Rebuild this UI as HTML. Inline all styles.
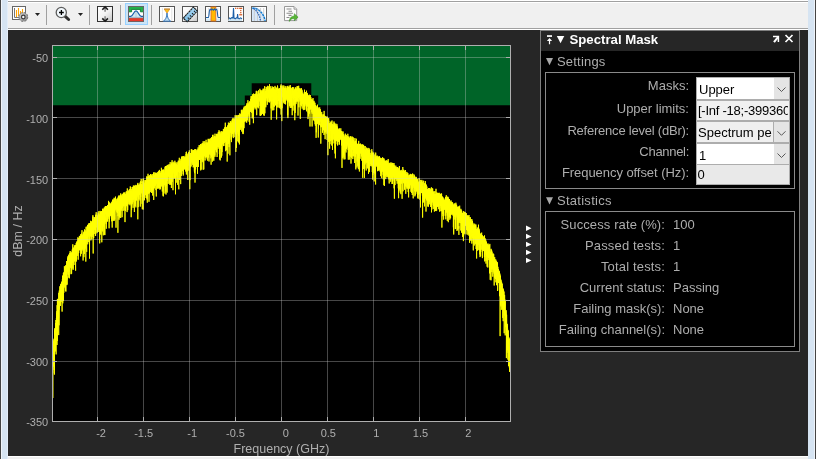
<!DOCTYPE html>
<html><head><meta charset="utf-8"><title>Spectrum Analyzer</title>
<style>
*{box-sizing:border-box;margin:0;padding:0}
html,body{width:816px;height:459px;overflow:hidden;background:#f0f0f0}
body{position:relative;font-family:"Liberation Sans",Arial,sans-serif;font-size:13px;color:#afafaf}
.abs{position:absolute}
#dark{left:8px;top:30px;width:800px;height:426px;background:#262626}
.t{position:absolute;white-space:nowrap;line-height:1}
.lab{position:absolute;white-space:nowrap;line-height:16px;height:16px;color:#adadad;font-size:13px;text-align:right}
.val{position:absolute;white-space:nowrap;line-height:16px;height:16px;color:#adadad;font-size:13px}
.tick{position:absolute;white-space:nowrap;font-size:11px;line-height:12px;height:12px;color:#afafaf}
.sep{position:absolute;top:5px;width:1px;height:20px;background:#a0a0a0}
#wrap{position:absolute;left:0;top:0;width:816px;height:459px;will-change:transform;transform:translateZ(0)}
</style></head><body><div id="wrap">
<!-- window chrome -->
<div class="abs" style="left:0;top:0;width:816px;height:1px;background:#fff"></div>
<div class="abs" style="left:0;top:1px;width:816px;height:1px;background:#a0a0a0"></div>
<div class="abs" style="left:0;top:2px;width:816px;height:1px;background:#fff"></div>
<div class="abs" style="left:0;top:28px;width:816px;height:1px;background:#a0a0a0"></div>
<div class="abs" style="left:0;top:29px;width:816px;height:1px;background:#fff"></div>
<div class="abs" style="left:0;top:456px;width:816px;height:1px;background:#fff"></div>
<div class="abs" style="left:0;top:0;width:1px;height:459px;background:#444"></div>
<div class="abs" style="left:1px;top:0;width:1px;height:459px;background:#f0f4fa"></div>
<div class="abs" style="left:2px;top:0;width:5px;height:459px;background:#d6e4f2"></div>
<div class="abs" style="left:7px;top:0;width:1px;height:459px;background:#e4eefa"></div>
<div class="abs" style="left:808px;top:0;width:6px;height:459px;background:#d6e4f2"></div>
<div class="abs" style="left:814px;top:0;width:1px;height:459px;background:#eef3fa"></div>
<div class="abs" style="left:815px;top:0;width:1px;height:459px;background:#444"></div>
<div id="dark" class="abs"></div>

<!-- toolbar -->
<div id="toolbar" class="abs" style="left:8px;top:3px;width:800px;height:25px;background:#f0f0f0">
</div>
<div class="sep" style="left:46px"></div>
<div class="sep" style="left:89px"></div>
<div class="sep" style="left:120px"></div>
<div class="sep" style="left:151px"></div>
<div class="sep" style="left:274px"></div>
<div class="abs" style="left:125px;top:3px;width:23px;height:22px;background:#cce4f7;border:1px solid #99d1ff"></div>
<svg class="abs" style="left:0;top:0" width="816" height="30" viewBox="0 0 816 30">
<defs>
<linearGradient id="gw" x1="0" y1="0" x2="1" y2="1"><stop offset="0" stop-color="#fff"/><stop offset="0.5" stop-color="#f4f4f4"/><stop offset="1" stop-color="#c4c4c4"/></linearGradient>
<linearGradient id="gg" x1="0" y1="0" x2="1" y2="1"><stop offset="0" stop-color="#dcdcdc"/><stop offset="1" stop-color="#808080"/></linearGradient>
<linearGradient id="gb" x1="0" y1="0" x2="0" y2="1"><stop offset="0" stop-color="#a9d6f2"/><stop offset="1" stop-color="#7fbfe8"/></linearGradient>
</defs>
<!-- 1: configure plot -->
<rect x="12.5" y="6.5" width="13" height="13" fill="#fff" stroke="#666"/>
<path d="M14.5 8v9.5h8" fill="none" stroke="#777"/>
<g stroke="#ffa200" stroke-width="1.1"><path d="M16.5 10v7M18.5 8v8M20.5 11v4M22.5 9v4"/></g>
<circle cx="23.3" cy="17" r="4.400" fill="none" stroke="#808080" stroke-width="1.100" stroke-dasharray="2 1.456"/>
<circle cx="23.3" cy="17" r="4.100" fill="url(#gg)" stroke="#777" stroke-width="0.500"/>
<circle cx="23.3" cy="17" r="1.800" fill="#f6f6f6" stroke="#3a3a3a" stroke-width="1.200"/>
<path d="M35 13h5l-2.5 3z" fill="#222"/>
<!-- 2: zoom -->
<path d="M65.2 16.4l3.4 3.1" stroke="#2e2e2e" stroke-width="3" stroke-linecap="round"/>
<circle cx="61.3" cy="12.5" r="5.1" fill="#f2f8fc" stroke="#5e5e5e" stroke-width="1.3"/>
<path d="M59 12.5h4.8M61.4 10.1v4.8" stroke="#000" stroke-width="1.3"/>
<path d="M78 13h5l-2.5 3z" fill="#222"/>
<!-- 3: autoscale -->
<rect x="97.5" y="6.5" width="15" height="15" fill="url(#gw)" stroke="#333"/>
<path d="M105.1 8v3.7M105.1 16.2v3.8" stroke="#8a8a8a" stroke-width="1.6"/>
<path d="M102.3 9.8l2.8-2.8 2.8 2.8M102.3 18.4l2.8 2.8 2.8-2.8" fill="none" stroke="#1a1a1a" stroke-width="1.6"/>
<!-- 4: spectral mask (selected) -->
<rect x="128.5" y="6.5" width="15" height="15" fill="#fff" stroke="#666"/>
<path d="M129 7h14v4.8h-2.6v-2.4h-8.8v2.4H129z" fill="#22b14c"/>
<path d="M129 11.8h2.6v-2.4h8.8v2.4H143" fill="none" stroke="#0b7d2f" stroke-width="0.9"/>
<rect x="129" y="16.3" width="14" height="2" fill="#a9d5ec"/>
<path d="M129.5 16.3h1.300c2.400 0 2.900-5.500 5.200-5.500s2.800 5.500 5.200 5.500h1.300z" fill="#d3e8f3"/>
<path d="M136 11v6" stroke="#9fb8c8" stroke-width="0.6"/>
<path d="M129 16.300h1.800c2.400 0 2.900-5.500 5.200-5.500s2.800 5.500 5.200 5.500h1.800" fill="none" stroke="#1c5fa8" stroke-width="1.200"/>
<rect x="129" y="18.2" width="14" height="2.9" fill="#e8382a"/>
<path d="M129 18.2h14" stroke="#b02a1e" stroke-width="0.6"/>
<!-- 5: peak finder -->
<rect x="159.5" y="6.5" width="15" height="15" fill="#fff" stroke="#555"/>
<path d="M162.4 8v13M171.8 8v13" stroke="#e2e2e2" stroke-width="1"/>
<path d="M163.300 21.200c2.600-1.600 3.300-3.800 3.700-8.200 .4 4.400 1.100 6.600 3.700 8.200z" fill="#c4e0f2" stroke="#2a6db5" stroke-width="0.9"/>
<path d="M164.300 9.200h5.400l-2.700 3.900z" fill="#ffc20e" stroke="#d98a1c" stroke-width="0.7"/>
<path d="M164 9h6" stroke="#b97a2a" stroke-width="0.9"/>
<!-- 6: ruler -->
<rect x="182.500" y="6.500" width="15" height="15" fill="url(#gw)" stroke="#555"/>
<path d="M183.300 18.100l10.100-11 3.900 3.900-10.100 10.800z" fill="url(#gb)" stroke="#1a1a1a" stroke-width="1.1" stroke-dasharray="2.2 0.5"/>
<path d="M187.800 17.700l1 1M189.900 15.400l1 1M192 13.100l1 1M194 10.900l1 1" stroke="#1a1a1a" stroke-width="1.1"/>
<!-- 7: channel measurements -->
<rect x="205.500" y="6.500" width="15" height="15" fill="#fff" stroke="#555"/>
<path d="M206 18.500h14v2.500h-14z" fill="#d5e8f4"/>
<path d="M208.500 8v10M217.800 8v10" stroke="#e4e4e4" stroke-width="1"/>
<rect x="211" y="7" width="4.800" height="14" fill="#ffb900" stroke="#e0701f" stroke-width="0.9"/>
<path d="M206 17.500h2.400c.8 0 .6-8 1.600-8.300l1 .9 1-1.200 1.300 1.300 1.300-1.300 1 1.200 1-.9c1 .3.800 8.300 1.600 8.300h2.300" fill="none" stroke="#1c5fa8" stroke-width="1.100"/>
<!-- 8: distortion -->
<rect x="228.500" y="6.500" width="15" height="15" fill="#fff" stroke="#555"/>
<path d="M229 18l1.300.8 1.500-1 1.200.3.500-10 .5 10 1.200.8 1.300-.9.700.2.400-4 .4 4 1.200.8 1.300-.9 1.500.8V21h-14z" fill="#cfe5f2"/>
<path d="M229 17.800l1.300.9 1.500-1.100 1.200.3.500-9.900.5 9.900 1.200.9 1.300-1 .7.200.4-4 .4 4 1.200.9 1.300-1 1.500.9" fill="none" stroke="#1c5fa8" stroke-width="1.100"/>
<g fill="#d9622b"><rect x="235" y="7.700" width="1.300" height="1.300"/><rect x="237.100" y="7.700" width="1.300" height="1.300"/><rect x="239.200" y="7.700" width="3" height="1.300"/><rect x="240.100" y="9.900" width="1.300" height="1.300"/><rect x="240.100" y="12" width="1.300" height="1.300"/><rect x="239.200" y="14.100" width="3" height="1.300"/></g>
<!-- 9: CCDF -->
<rect x="251.500" y="6.500" width="15" height="15" fill="#fff" stroke="#666"/>
<path d="M252 7h3c6 1.500 9.500 7 10 14H252z" fill="#d6e8fb"/>
<path d="M254.300 8v13M257.500 8v13M260.600 8v13M263.700 8v13" stroke="#c9c9c9" stroke-width="0.900"/>
<path d="M252.300 8.200h2.500c5.500 1.800 9.200 6.300 10.400 12.800" fill="none" stroke="#0a78d0" stroke-width="1.400" stroke-dasharray="2.300 .800"/>
<path d="M253.500 8.600c4 2.600 6.300 6.800 7 12.400" fill="none" stroke="#2a5fb0" stroke-width="1.200" stroke-dasharray="1.600 .900"/>
<!-- 10: export -->
<path d="M284.500 6.500h9.500l2.700 2.700v11.400h-12.200z" fill="#fbfbfb" stroke="#999"/>
<path d="M294 6.500v2.700h2.700" fill="#e6e6e6" stroke="#8c8c8c" stroke-width="0.8"/>
<path d="M286.500 9h5M288.500 11.200h3.500M286.500 13.300h6.500M288.500 15.400h3M286.500 17.500h3" stroke="#8c8c8c" stroke-width="1.100"/>
<path d="M289.300 21.500c.100-3.500 2-5.400 5-5.500v-2.300l3.800 3.500-3.800 3.500v-2.200c-2.200-.100-3.800.900-5 3z" fill="#58b535" stroke="#2f8a1e" stroke-width="0.500"/>

</svg>

<!-- plot -->
<svg class="abs" style="left:0;top:30px" width="540" height="426" viewBox="0 30 540 426">
<rect x="52.5" y="45.5" width="458" height="376" fill="#000"/>
<path d="M52.5 45.5H510.5V105.200H318.200V95.400H311.300V83.300H251.700V95.400H244.800V105.200H52.5Z" fill="#006428"/>
<polyline fill="none" stroke="#ffff00" stroke-width="0.9" stroke-linejoin="round" points="52.5,365.5 52.6,361.6 52.6,366.0 52.7,371.0 52.7,373.2 52.8,348.8 52.8,398.0 52.9,348.6 52.9,361.5 53.0,366.0 53.1,360.6 53.1,364.6 53.2,354.8 53.2,352.5 53.3,347.0 53.3,364.6 53.4,341.3 53.5,352.7 53.5,356.8 53.6,348.3 53.6,365.5 53.7,366.6 53.7,344.5 53.8,347.3 53.8,339.4 53.9,349.9 54.0,348.7 54.0,342.4 54.1,347.7 54.1,369.9 54.2,350.9 54.2,341.6 54.3,344.5 54.3,338.3 54.4,374.6 54.5,340.5 54.5,349.2 54.6,346.2 54.6,330.5 54.7,335.4 54.7,328.3 54.8,332.9 54.8,330.7 54.9,349.8 55.0,344.1 55.0,345.3 55.1,333.5 55.1,332.6 55.2,348.4 55.2,340.0 55.3,332.2 55.4,351.4 55.4,348.3 55.5,332.4 55.5,326.5 55.6,323.1 55.6,333.2 55.7,327.7 55.7,331.3 55.8,329.1 55.9,343.3 55.9,320.0 56.0,327.7 56.0,327.1 56.1,354.4 56.1,324.2 56.2,323.7 56.2,323.1 56.3,327.5 56.4,319.9 56.4,318.1 56.5,324.6 56.5,328.9 56.6,315.7 56.6,322.4 56.7,320.9 56.7,335.5 56.8,328.6 56.9,311.1 56.9,318.7 57.0,345.0 57.0,312.7 57.1,320.0 57.1,305.2 57.2,314.5 57.3,312.7 57.3,318.5 57.4,340.9 57.4,298.9 57.5,312.9 57.5,303.5 57.6,319.4 57.6,301.2 57.7,333.0 57.8,307.8 57.8,321.1 57.9,316.5 57.9,303.1 58.0,299.7 58.0,307.8 58.1,302.8 58.1,304.3 58.2,309.0 58.3,299.3 58.3,300.2 58.4,310.2 58.4,305.3 58.5,302.2 58.5,301.9 58.6,317.7 58.7,292.8 58.7,335.1 58.8,299.6 58.8,299.8 58.9,308.7 58.9,303.1 59.0,306.5 59.0,325.3 59.1,301.2 59.2,298.5 59.2,298.5 59.3,290.5 59.3,309.6 59.4,308.6 59.4,301.5 59.5,307.3 59.5,301.2 59.6,291.0 59.7,295.2 59.7,299.9 59.8,298.2 59.8,286.3 59.9,299.6 59.9,294.8 60.0,291.4 60.0,293.6 60.1,293.5 60.2,291.4 60.2,302.6 60.3,296.9 60.3,291.6 60.4,295.6 60.4,288.1 60.5,305.9 60.6,295.8 60.6,298.2 60.7,291.3 60.7,295.8 60.8,283.9 60.8,291.6 60.9,284.8 60.9,287.3 61.0,289.3 61.1,288.8 61.1,292.7 61.2,296.1 61.2,297.1 61.3,301.8 61.3,283.7 61.4,291.1 61.4,295.2 61.5,286.2 61.6,291.2 61.6,287.8 61.7,281.8 61.7,295.6 61.8,287.3 61.8,300.0 61.9,291.3 61.9,288.6 62.0,293.2 62.1,311.6 62.1,291.4 62.2,281.5 62.2,283.0 62.3,287.8 62.3,293.3 62.4,279.1 62.5,281.7 62.5,275.6 62.6,287.5 62.6,278.1 62.7,299.9 62.7,300.9 62.8,303.3 62.8,299.0 62.9,286.3 63.0,297.8 63.0,278.4 63.1,301.1 63.1,284.6 63.2,289.4 63.2,281.0 63.3,300.8 63.3,283.0 63.4,272.9 63.5,278.2 63.5,284.5 63.6,275.6 63.6,280.2 63.7,288.3 63.7,274.4 63.8,292.8 63.9,274.3 63.9,272.8 64.0,276.6 64.0,282.1 64.1,271.9 64.1,287.5 64.2,279.9 64.2,273.4 64.3,275.1 64.4,275.8 64.4,266.2 64.5,275.8 64.5,282.3 64.6,276.5 64.6,271.6 64.7,284.2 64.7,271.2 64.8,267.5 64.9,274.0 64.9,286.7 65.0,279.7 65.0,277.1 65.1,274.0 65.1,275.7 65.2,268.3 65.2,271.9 65.3,278.9 65.4,290.8 65.4,278.4 65.5,278.1 65.5,268.5 65.6,275.9 65.6,265.3 65.7,270.5 65.8,269.0 65.8,267.1 65.9,291.6 65.9,269.7 66.0,280.1 66.0,269.5 66.1,266.1 66.1,271.9 66.2,274.6 66.3,266.3 66.3,271.1 66.4,275.9 66.4,272.0 66.5,270.2 66.5,280.1 66.6,267.5 66.6,261.0 66.7,270.7 66.8,285.1 66.8,264.2 66.9,274.2 66.9,279.6 67.0,276.5 67.0,284.4 67.1,268.6 67.1,265.8 67.2,271.2 67.3,262.7 67.3,265.4 67.4,269.2 67.4,265.9 67.5,262.4 67.5,269.4 67.6,266.4 67.7,272.0 67.7,269.4 67.8,256.4 67.8,264.0 67.9,265.2 67.9,258.3 68.0,274.4 68.0,259.7 68.1,258.6 68.2,268.8 68.2,260.8 68.3,259.0 68.3,258.4 68.4,261.9 68.4,274.9 68.5,273.4 68.5,255.8 68.6,259.1 68.7,254.7 68.7,262.2 68.8,259.0 68.8,277.6 68.9,260.2 68.9,265.9 69.0,262.8 69.1,271.5 69.1,256.4 69.2,262.0 69.2,263.1 69.3,262.8 69.3,278.3 69.4,254.9 69.4,262.7 69.5,265.0 69.6,265.1 69.6,257.1 69.7,262.8 69.7,266.2 69.8,253.1 69.8,261.7 69.9,267.0 69.9,257.4 70.0,257.0 70.1,262.4 70.1,265.0 70.2,251.0 70.2,264.1 70.3,262.5 70.3,252.7 70.4,262.6 70.4,263.8 70.5,253.9 70.6,259.4 70.6,257.8 70.7,261.5 70.7,254.8 70.8,268.1 70.8,254.2 70.9,264.4 71.0,262.5 71.0,274.2 71.1,253.5 71.1,253.8 71.2,252.5 71.2,262.1 71.3,264.8 71.3,253.5 71.4,259.9 71.5,253.6 71.5,259.7 71.6,259.2 71.6,273.7 71.7,253.4 71.7,260.5 71.8,267.5 71.8,254.4 71.9,257.3 72.0,259.7 72.0,251.8 72.1,259.6 72.1,255.2 72.2,260.9 72.2,253.0 72.3,249.4 72.3,252.3 72.4,257.6 72.5,249.5 72.5,253.8 72.6,262.2 72.6,261.3 72.7,262.6 72.7,251.0 72.8,244.3 72.9,250.5 72.9,268.6 73.0,254.0 73.0,248.6 73.1,255.1 73.1,269.9 73.2,258.2 73.2,258.0 73.3,261.2 73.4,258.2 73.4,248.3 73.5,251.0 73.5,254.0 73.6,248.2 73.6,247.6 73.7,254.3 73.7,251.8 73.8,256.4 73.9,259.0 73.9,253.1 74.0,265.0 74.0,252.8 74.1,261.7 74.1,253.4 74.2,251.3 74.3,253.8 74.3,247.7 74.4,253.2 74.4,252.9 74.5,259.2 74.5,250.8 74.6,245.7 74.6,246.1 74.7,261.0 74.8,247.0 74.8,248.2 74.9,246.3 74.9,245.2 75.0,249.0 75.0,250.1 75.1,246.0 75.1,247.6 75.2,253.6 75.3,247.7 75.3,253.3 75.4,247.8 75.4,250.9 75.5,253.7 75.5,252.8 75.6,270.7 75.6,245.0 75.7,250.6 75.8,252.8 75.8,250.3 75.9,246.6 75.9,249.2 76.0,252.1 76.0,247.1 76.1,247.9 76.2,243.1 76.2,259.2 76.3,247.4 76.3,248.0 76.4,245.9 76.4,261.5 76.5,252.1 76.5,255.9 76.6,250.2 76.7,243.0 76.7,254.2 76.8,245.6 76.8,242.3 76.9,246.5 76.9,246.8 77.0,241.3 77.0,243.3 77.1,247.7 77.2,242.6 77.2,247.7 77.3,249.0 77.3,245.2 77.4,243.0 77.4,248.5 77.5,244.1 77.5,246.0 77.6,247.0 77.7,241.7 77.7,252.4 77.8,255.9 77.8,243.8 77.9,245.6 77.9,237.3 78.0,244.6 78.1,240.4 78.1,246.4 78.2,259.7 78.2,243.8 78.3,250.9 78.3,247.1 78.4,238.1 78.4,246.3 78.5,246.0 78.6,246.4 78.6,239.1 78.7,253.1 78.7,246.1 78.8,249.9 78.8,247.2 78.9,242.4 78.9,245.7 79.0,239.2 79.1,241.6 79.1,246.6 79.2,245.3 79.2,246.1 79.3,243.1 79.3,239.8 79.4,235.9 79.5,250.3 79.5,240.1 79.6,248.2 79.6,238.5 79.7,240.9 79.7,245.0 79.8,242.1 79.8,238.0 79.9,246.1 80.0,237.8 80.0,241.6 80.1,236.3 80.1,238.5 80.2,241.0 80.2,243.1 80.3,238.0 80.3,237.5 80.4,249.9 80.5,237.9 80.5,244.2 80.6,241.2 80.6,256.3 80.7,234.2 80.7,242.4 80.8,239.6 80.8,235.8 80.9,240.5 81.0,244.5 81.0,244.7 81.1,236.2 81.1,243.9 81.2,246.2 81.2,235.7 81.3,247.8 81.4,237.1 81.4,243.8 81.5,253.7 81.5,234.9 81.6,233.5 81.6,235.9 81.7,241.2 81.7,249.9 81.8,244.0 81.9,241.1 81.9,235.1 82.0,230.2 82.0,242.1 82.1,242.6 82.1,243.4 82.2,236.8 82.2,240.8 82.3,244.0 82.4,241.9 82.4,234.5 82.5,242.3 82.5,237.6 82.6,249.1 82.6,246.1 82.7,244.9 82.8,244.0 82.8,244.5 82.9,235.2 82.9,250.6 83.0,246.7 83.0,240.6 83.1,236.0 83.1,260.5 83.2,237.7 83.3,239.8 83.3,241.2 83.4,233.2 83.4,244.1 83.5,239.3 83.5,239.5 83.6,235.2 83.6,234.2 83.7,239.3 83.8,231.7 83.8,234.1 83.9,241.3 83.9,257.2 84.0,232.4 84.0,233.3 84.1,235.2 84.1,247.0 84.2,234.7 84.3,238.4 84.3,243.5 84.4,234.8 84.4,254.0 84.5,229.4 84.5,234.8 84.6,237.3 84.7,239.0 84.7,239.5 84.8,232.0 84.8,233.3 84.9,238.4 84.9,233.5 85.0,249.2 85.0,236.7 85.1,237.3 85.2,235.2 85.2,238.6 85.3,247.8 85.3,241.9 85.4,241.2 85.4,233.9 85.5,241.1 85.5,241.8 85.6,232.9 85.7,230.4 85.7,231.6 85.8,240.2 85.8,261.6 85.9,233.9 85.9,231.9 86.0,239.8 86.0,231.8 86.1,226.8 86.2,235.2 86.2,234.2 86.3,231.9 86.3,232.5 86.4,232.4 86.4,238.4 86.5,238.0 86.6,240.0 86.6,237.1 86.7,251.9 86.7,231.4 86.8,235.6 86.8,238.1 86.9,232.3 86.9,235.6 87.0,241.9 87.1,233.0 87.1,226.5 87.2,240.2 87.2,228.3 87.3,233.3 87.3,234.5 87.4,232.0 87.4,226.8 87.5,228.6 87.6,236.0 87.6,224.9 87.7,227.3 87.7,244.3 87.8,225.3 87.8,231.4 87.9,235.6 88.0,224.9 88.0,230.8 88.1,227.1 88.1,231.6 88.2,228.0 88.2,230.2 88.3,242.1 88.3,235.6 88.4,236.5 88.5,231.7 88.5,234.3 88.6,235.1 88.6,226.1 88.7,234.1 88.7,224.1 88.8,223.7 88.8,229.9 88.9,232.7 89.0,231.7 89.0,235.0 89.1,233.2 89.1,223.1 89.2,231.9 89.2,227.6 89.3,235.0 89.3,230.2 89.4,225.3 89.5,227.8 89.5,258.6 89.6,230.8 89.6,232.1 89.7,227.2 89.7,233.0 89.8,229.0 89.9,223.5 89.9,229.6 90.0,231.7 90.0,223.0 90.1,230.0 90.1,234.2 90.2,225.1 90.2,233.5 90.3,236.5 90.4,228.3 90.4,227.1 90.5,227.6 90.5,226.6 90.6,227.8 90.6,225.9 90.7,220.8 90.7,227.4 90.8,229.5 90.9,227.8 90.9,240.4 91.0,229.2 91.0,225.5 91.1,227.9 91.1,224.6 91.2,226.0 91.2,228.4 91.3,227.7 91.4,230.1 91.4,226.0 91.5,229.5 91.5,236.2 91.6,222.8 91.6,221.7 91.7,221.3 91.8,239.2 91.8,222.3 91.9,224.8 91.9,233.4 92.0,229.3 92.0,228.8 92.1,237.0 92.1,227.1 92.2,228.8 92.3,228.7 92.3,224.6 92.4,233.1 92.4,231.3 92.5,229.9 92.5,228.1 92.6,220.7 92.6,224.4 92.7,232.5 92.8,223.5 92.8,222.7 92.9,215.2 92.9,234.8 93.0,222.3 93.0,224.4 93.1,216.8 93.2,253.5 93.2,219.2 93.3,228.9 93.3,222.1 93.4,224.8 93.4,224.1 93.5,229.9 93.5,234.4 93.6,229.4 93.7,238.0 93.7,221.4 93.8,228.6 93.8,222.6 93.9,223.9 93.9,228.5 94.0,227.2 94.0,233.8 94.1,221.6 94.2,224.9 94.2,229.9 94.3,227.9 94.3,226.3 94.4,224.2 94.4,224.5 94.5,217.5 94.5,229.5 94.6,222.0 94.7,223.5 94.7,226.5 94.8,220.5 94.8,219.0 94.9,217.2 94.9,226.6 95.0,217.8 95.1,225.0 95.1,234.0 95.2,218.0 95.2,218.9 95.3,227.4 95.3,222.1 95.4,235.7 95.4,223.3 95.5,219.6 95.6,214.8 95.6,235.9 95.7,217.9 95.7,219.9 95.8,233.8 95.8,220.3 95.9,222.9 95.9,224.7 96.0,217.0 96.1,219.9 96.1,218.0 96.2,212.2 96.2,216.1 96.3,216.0 96.3,214.8 96.4,216.9 96.4,227.4 96.5,221.3 96.6,221.5 96.6,221.2 96.7,217.7 96.7,220.0 96.8,221.6 96.8,216.9 96.9,222.8 97.0,220.7 97.0,220.4 97.1,219.9 97.1,232.8 97.2,226.0 97.2,232.2 97.3,215.4 97.3,220.7 97.4,218.2 97.5,220.0 97.5,221.1 97.6,221.6 97.6,221.2 97.7,218.2 97.7,216.6 97.8,224.8 97.8,222.8 97.9,226.9 98.0,224.2 98.0,229.9 98.1,213.9 98.1,212.5 98.2,222.0 98.2,217.7 98.3,232.0 98.4,219.0 98.4,214.0 98.5,226.0 98.5,228.9 98.6,219.1 98.6,216.3 98.7,227.5 98.7,220.9 98.8,229.5 98.9,211.1 98.9,227.4 99.0,222.5 99.0,226.3 99.1,213.7 99.1,219.1 99.2,220.2 99.2,215.4 99.3,216.1 99.4,227.5 99.4,218.6 99.5,214.9 99.5,220.9 99.6,219.4 99.6,230.8 99.7,243.4 99.7,230.3 99.8,224.1 99.9,231.0 99.9,216.5 100.0,215.1 100.0,225.7 100.1,233.1 100.1,210.9 100.2,213.8 100.3,228.8 100.3,216.4 100.4,230.5 100.4,219.4 100.5,211.7 100.5,217.0 100.6,220.4 100.6,233.6 100.7,223.6 100.8,234.8 100.8,229.8 100.9,222.1 100.9,231.0 101.0,224.2 101.0,212.5 101.1,216.5 101.1,215.5 101.2,223.5 101.3,219.6 101.3,214.6 101.4,218.3 101.4,211.8 101.5,224.5 101.5,223.0 101.6,217.7 101.6,211.1 101.7,216.0 101.8,242.3 101.8,213.8 101.9,225.5 101.9,223.1 102.0,211.0 102.0,216.4 102.1,211.9 102.2,225.2 102.2,218.1 102.3,230.5 102.3,216.6 102.4,213.9 102.4,219.9 102.5,209.1 102.5,220.4 102.6,216.6 102.7,213.7 102.7,231.5 102.8,220.4 102.8,217.0 102.9,214.9 102.9,208.6 103.0,209.0 103.0,214.0 103.1,220.7 103.2,216.8 103.2,218.7 103.3,216.5 103.3,235.3 103.4,221.1 103.4,211.0 103.5,210.5 103.6,226.4 103.6,213.2 103.7,219.6 103.7,211.2 103.8,209.5 103.8,211.5 103.9,217.9 103.9,226.7 104.0,213.3 104.1,210.4 104.1,216.3 104.2,208.8 104.2,208.6 104.3,218.0 104.3,207.5 104.4,234.8 104.4,211.7 104.5,216.4 104.6,221.7 104.6,211.7 104.7,208.1 104.7,220.8 104.8,212.9 104.8,211.6 104.9,235.1 104.9,216.5 105.0,221.1 105.1,207.5 105.1,213.4 105.2,222.3 105.2,215.5 105.3,206.2 105.3,213.8 105.4,211.9 105.5,206.4 105.5,211.8 105.6,212.3 105.6,210.8 105.7,212.4 105.7,206.4 105.8,213.1 105.8,206.6 105.9,210.1 106.0,213.8 106.0,206.6 106.1,224.1 106.1,208.6 106.2,210.2 106.2,213.0 106.3,228.7 106.3,210.3 106.4,210.0 106.5,212.2 106.5,216.1 106.6,211.7 106.6,210.1 106.7,208.6 106.7,206.7 106.8,213.4 106.8,206.2 106.9,215.8 107.0,206.3 107.0,212.1 107.1,212.2 107.1,209.1 107.2,221.5 107.2,206.3 107.3,211.9 107.4,215.9 107.4,209.5 107.5,205.2 107.5,206.2 107.6,219.0 107.6,221.4 107.7,208.5 107.7,213.7 107.8,209.5 107.9,206.2 107.9,214.9 108.0,207.9 108.0,214.7 108.1,217.3 108.1,209.5 108.2,204.9 108.2,208.8 108.3,206.0 108.4,209.6 108.4,215.7 108.5,212.3 108.5,200.9 108.6,215.4 108.6,208.5 108.7,211.5 108.8,206.4 108.8,210.6 108.9,215.0 108.9,205.7 109.0,219.1 109.0,206.1 109.1,201.9 109.1,228.3 109.2,211.5 109.3,215.6 109.3,216.8 109.4,204.4 109.4,207.7 109.5,210.9 109.5,221.6 109.6,206.3 109.6,203.2 109.7,210.5 109.8,210.8 109.8,208.8 109.9,210.5 109.9,208.4 110.0,204.8 110.0,208.6 110.1,209.9 110.1,210.9 110.2,216.2 110.3,206.3 110.3,205.9 110.4,215.5 110.4,209.6 110.5,205.1 110.5,209.3 110.6,210.7 110.7,206.7 110.7,204.1 110.8,207.3 110.8,204.0 110.9,207.3 110.9,203.2 111.0,207.9 111.0,205.4 111.1,208.8 111.2,209.5 111.2,211.1 111.3,206.0 111.3,211.3 111.4,218.7 111.4,202.5 111.5,216.9 111.5,205.1 111.6,214.7 111.7,210.1 111.7,221.3 111.8,207.6 111.8,205.8 111.9,209.8 111.9,201.7 112.0,205.2 112.0,209.6 112.1,204.4 112.2,227.6 112.2,206.3 112.3,209.1 112.3,216.1 112.4,208.0 112.4,209.3 112.5,207.8 112.6,216.1 112.6,199.7 112.7,221.1 112.7,211.0 112.8,199.8 112.8,210.8 112.9,214.4 112.9,202.9 113.0,206.5 113.1,201.0 113.1,204.1 113.2,203.5 113.2,214.4 113.3,201.7 113.3,201.8 113.4,200.7 113.4,205.5 113.5,212.4 113.6,200.0 113.6,204.7 113.7,199.6 113.7,220.7 113.8,200.2 113.8,209.6 113.9,211.2 114.0,206.4 114.0,208.2 114.1,204.7 114.1,197.8 114.2,220.8 114.2,209.1 114.3,199.2 114.3,205.4 114.4,202.4 114.5,207.9 114.5,204.4 114.6,211.7 114.6,202.4 114.7,200.1 114.7,200.3 114.8,219.6 114.8,201.3 114.9,203.0 115.0,202.9 115.0,205.9 115.1,197.9 115.1,204.4 115.2,199.1 115.2,206.7 115.3,203.2 115.3,202.5 115.4,204.8 115.5,196.6 115.5,200.9 115.6,202.8 115.6,209.3 115.7,203.1 115.7,198.4 115.8,208.1 115.9,203.1 115.9,210.4 116.0,201.1 116.0,227.7 116.1,214.5 116.1,201.7 116.2,206.4 116.2,200.7 116.3,208.3 116.4,203.6 116.4,203.1 116.5,208.4 116.5,207.6 116.6,203.4 116.6,203.7 116.7,203.4 116.7,208.6 116.8,200.5 116.9,212.4 116.9,204.8 117.0,201.9 117.0,199.1 117.1,209.4 117.1,202.7 117.2,198.8 117.2,200.4 117.3,209.7 117.4,205.2 117.4,211.7 117.5,202.5 117.5,213.0 117.6,199.4 117.6,210.0 117.7,209.6 117.8,198.3 117.8,198.4 117.9,207.0 117.9,232.8 118.0,205.2 118.0,216.2 118.1,202.3 118.1,209.4 118.2,196.8 118.3,202.5 118.3,206.4 118.4,207.5 118.4,198.0 118.5,209.3 118.5,206.8 118.6,210.9 118.6,195.9 118.7,205.9 118.8,207.2 118.8,200.0 118.9,209.4 118.9,200.8 119.0,208.5 119.0,219.7 119.1,195.3 119.2,200.1 119.2,200.6 119.3,205.2 119.3,214.6 119.4,212.5 119.4,203.8 119.5,217.5 119.5,198.1 119.6,198.4 119.7,200.7 119.7,196.3 119.8,215.7 119.8,212.5 119.9,198.7 119.9,203.7 120.0,200.4 120.0,208.9 120.1,203.3 120.2,209.9 120.2,203.3 120.3,203.6 120.3,197.4 120.4,195.3 120.4,199.2 120.5,202.6 120.5,209.3 120.6,197.2 120.7,193.4 120.7,218.0 120.8,201.0 120.8,204.8 120.9,198.8 120.9,204.0 121.0,198.8 121.1,197.3 121.1,196.8 121.2,201.5 121.2,207.2 121.3,198.4 121.3,210.6 121.4,195.9 121.4,201.9 121.5,206.7 121.6,202.8 121.6,208.6 121.7,202.6 121.7,203.8 121.8,198.7 121.8,194.7 121.9,198.6 121.9,203.4 122.0,199.9 122.1,217.2 122.1,208.1 122.2,201.9 122.2,197.9 122.3,203.3 122.3,196.9 122.4,193.8 122.4,208.1 122.5,197.6 122.6,198.7 122.6,202.9 122.7,199.9 122.7,199.3 122.8,200.2 122.8,205.1 122.9,201.3 123.0,210.9 123.0,200.0 123.1,201.4 123.1,196.6 123.2,204.2 123.2,199.8 123.3,204.7 123.3,205.7 123.4,195.9 123.5,200.3 123.5,192.6 123.6,206.4 123.6,201.3 123.7,200.0 123.7,199.2 123.8,205.1 123.8,204.4 123.9,195.8 124.0,195.1 124.0,193.0 124.1,195.1 124.1,210.4 124.2,201.9 124.2,201.3 124.3,206.0 124.4,197.2 124.4,196.1 124.5,192.7 124.5,199.4 124.6,196.6 124.6,196.2 124.7,196.6 124.7,203.5 124.8,195.1 124.9,197.8 124.9,200.1 125.0,222.1 125.0,192.3 125.1,198.4 125.1,200.9 125.2,206.3 125.2,199.3 125.3,194.9 125.4,195.1 125.4,202.5 125.5,194.1 125.5,210.9 125.6,198.9 125.6,208.1 125.7,197.1 125.7,203.1 125.8,202.4 125.9,205.4 125.9,202.0 126.0,196.9 126.0,196.8 126.1,202.9 126.1,199.1 126.2,196.0 126.3,197.6 126.3,191.2 126.4,191.6 126.4,206.2 126.5,194.6 126.5,193.2 126.6,193.0 126.6,192.6 126.7,198.9 126.8,198.4 126.8,201.1 126.9,204.4 126.9,191.7 127.0,194.9 127.0,198.7 127.1,202.1 127.1,212.1 127.2,196.8 127.3,196.5 127.3,188.4 127.4,196.0 127.4,203.8 127.5,207.2 127.5,192.0 127.6,204.6 127.6,199.2 127.7,210.2 127.8,207.2 127.8,194.7 127.9,198.3 127.9,195.5 128.0,192.0 128.0,197.9 128.1,194.1 128.2,193.6 128.2,200.5 128.3,190.6 128.3,192.5 128.4,193.5 128.4,198.0 128.5,191.1 128.5,195.1 128.6,193.8 128.7,198.3 128.7,198.5 128.8,197.9 128.8,204.3 128.9,196.2 128.9,202.4 129.0,196.0 129.0,192.5 129.1,197.6 129.2,195.6 129.2,189.7 129.3,198.8 129.3,194.5 129.4,204.1 129.4,197.6 129.5,195.3 129.6,201.7 129.6,200.6 129.7,189.1 129.7,189.5 129.8,192.1 129.8,200.9 129.9,196.4 129.9,199.6 130.0,205.3 130.1,195.8 130.1,198.6 130.2,191.7 130.2,197.4 130.3,197.6 130.3,186.4 130.4,198.5 130.4,191.0 130.5,191.1 130.6,193.3 130.6,195.8 130.7,202.3 130.7,197.5 130.8,203.8 130.8,197.6 130.9,192.5 130.9,187.1 131.0,194.2 131.1,200.6 131.1,195.7 131.2,209.0 131.2,217.2 131.3,193.6 131.3,197.2 131.4,197.6 131.5,202.0 131.5,193.2 131.6,189.1 131.6,210.1 131.7,193.1 131.7,203.1 131.8,191.2 131.8,194.7 131.9,193.7 132.0,195.0 132.0,194.1 132.1,192.3 132.1,197.1 132.2,204.2 132.2,193.2 132.3,200.6 132.3,200.4 132.4,202.1 132.5,196.9 132.5,193.1 132.6,188.7 132.6,187.0 132.7,194.5 132.7,194.4 132.8,192.1 132.8,196.6 132.9,193.8 133.0,202.2 133.0,188.5 133.1,207.8 133.1,198.5 133.2,194.5 133.2,186.8 133.3,188.9 133.4,185.5 133.4,195.7 133.5,198.9 133.5,195.4 133.6,197.0 133.6,191.5 133.7,188.1 133.7,200.2 133.8,195.8 133.9,187.3 133.9,186.8 134.0,190.5 134.0,198.3 134.1,196.7 134.1,195.0 134.2,198.6 134.2,199.1 134.3,193.9 134.4,212.0 134.4,198.7 134.5,185.8 134.5,191.3 134.6,195.6 134.6,197.8 134.7,190.8 134.8,186.2 134.8,198.7 134.9,196.1 134.9,185.6 135.0,188.2 135.0,191.3 135.1,206.0 135.1,187.7 135.2,191.8 135.3,195.8 135.3,195.8 135.4,199.8 135.4,194.0 135.5,204.1 135.5,192.6 135.6,200.7 135.6,191.8 135.7,201.1 135.8,200.3 135.8,184.9 135.9,207.4 135.9,194.6 136.0,189.5 136.0,188.7 136.1,188.0 136.1,191.5 136.2,187.9 136.3,192.9 136.3,193.7 136.4,190.1 136.4,190.2 136.5,199.9 136.5,189.0 136.6,200.4 136.7,188.8 136.7,186.2 136.8,194.2 136.8,192.9 136.9,185.2 136.9,185.3 137.0,188.5 137.0,194.3 137.1,189.9 137.2,195.5 137.2,185.6 137.3,189.3 137.3,191.5 137.4,193.9 137.4,193.1 137.5,195.1 137.5,183.8 137.6,190.4 137.7,190.3 137.7,193.9 137.8,184.6 137.8,219.3 137.9,182.9 137.9,192.8 138.0,197.4 138.0,194.8 138.1,192.1 138.2,194.0 138.2,207.1 138.3,190.1 138.3,192.7 138.4,191.2 138.4,191.4 138.5,185.4 138.6,190.5 138.6,195.2 138.7,192.7 138.7,189.7 138.8,190.5 138.8,187.6 138.9,199.2 138.9,184.7 139.0,186.9 139.1,188.3 139.1,185.0 139.2,195.1 139.2,189.6 139.3,191.2 139.3,192.7 139.4,192.7 139.4,190.4 139.5,193.5 139.6,188.3 139.6,186.8 139.7,186.3 139.7,191.1 139.8,183.5 139.8,185.8 139.9,186.5 140.0,200.5 140.0,185.2 140.1,188.2 140.1,194.1 140.2,193.0 140.2,193.6 140.3,206.6 140.3,182.0 140.4,189.6 140.5,181.3 140.5,195.1 140.6,184.5 140.6,183.8 140.7,196.9 140.7,186.4 140.8,191.3 140.8,194.1 140.9,190.9 141.0,190.8 141.0,191.4 141.1,181.7 141.1,183.1 141.2,179.0 141.2,193.1 141.3,185.9 141.3,190.0 141.4,184.2 141.5,191.3 141.5,187.9 141.6,187.3 141.6,187.1 141.7,188.2 141.7,184.6 141.8,185.9 141.9,186.6 141.9,192.3 142.0,185.4 142.0,186.9 142.1,186.1 142.1,203.8 142.2,185.7 142.2,186.5 142.3,209.2 142.4,185.9 142.4,189.3 142.5,187.4 142.5,190.3 142.6,201.2 142.6,181.4 142.7,183.8 142.7,191.6 142.8,190.9 142.9,193.2 142.9,190.1 143.0,183.2 143.0,178.9 143.1,179.1 143.1,181.9 143.2,209.6 143.3,195.0 143.3,185.2 143.4,189.8 143.4,183.7 143.5,184.0 143.5,178.6 143.6,196.5 143.6,193.6 143.7,189.4 143.8,180.5 143.8,192.9 143.9,187.3 143.9,188.4 144.0,189.9 144.0,185.7 144.1,192.9 144.1,187.6 144.2,200.4 144.3,187.8 144.3,190.8 144.4,184.7 144.4,183.7 144.5,192.2 144.5,199.8 144.6,188.0 144.6,187.0 144.7,182.9 144.8,186.3 144.8,185.1 144.9,188.7 144.9,188.3 145.0,179.9 145.0,184.1 145.1,191.1 145.2,188.0 145.2,187.6 145.3,191.1 145.3,181.8 145.4,195.2 145.4,187.5 145.5,187.5 145.5,180.8 145.6,186.3 145.7,190.2 145.7,183.2 145.8,180.2 145.8,185.5 145.9,185.4 145.9,192.6 146.0,185.7 146.0,182.7 146.1,198.0 146.2,184.1 146.2,185.0 146.3,180.5 146.3,186.2 146.4,182.5 146.4,191.3 146.5,185.8 146.5,197.7 146.6,194.2 146.7,183.4 146.7,176.4 146.8,184.9 146.8,183.4 146.9,187.8 146.9,193.0 147.0,199.4 147.1,180.5 147.1,198.1 147.2,182.9 147.2,183.4 147.3,202.7 147.3,177.3 147.4,189.6 147.4,183.2 147.5,188.1 147.6,182.7 147.6,190.9 147.7,177.2 147.7,184.6 147.8,184.6 147.8,183.9 147.9,183.3 147.9,185.5 148.0,173.8 148.1,184.5 148.1,188.3 148.2,192.6 148.2,177.1 148.3,175.9 148.3,189.3 148.4,183.4 148.5,181.5 148.5,178.8 148.6,183.7 148.6,185.2 148.7,192.7 148.7,179.1 148.8,177.5 148.8,194.1 148.9,181.4 149.0,178.2 149.0,201.8 149.1,188.0 149.1,177.1 149.2,188.9 149.2,179.0 149.3,175.1 149.3,193.0 149.4,178.2 149.5,177.5 149.5,178.9 149.6,183.3 149.6,180.0 149.7,186.1 149.7,183.0 149.8,189.9 149.8,176.4 149.9,187.8 150.0,185.3 150.0,179.8 150.1,177.0 150.1,181.4 150.2,192.0 150.2,181.0 150.3,180.6 150.4,181.8 150.4,181.9 150.5,185.2 150.5,174.0 150.6,182.4 150.6,177.0 150.7,182.6 150.7,175.4 150.8,176.4 150.9,174.7 150.9,181.8 151.0,187.4 151.0,182.4 151.1,185.1 151.1,191.6 151.2,179.6 151.2,183.1 151.3,183.8 151.4,193.0 151.4,175.8 151.5,190.1 151.5,181.2 151.6,176.2 151.6,177.7 151.7,180.8 151.7,187.2 151.8,180.6 151.9,174.4 151.9,181.8 152.0,181.8 152.0,179.2 152.1,185.9 152.1,179.4 152.2,178.9 152.3,179.2 152.3,182.2 152.4,181.2 152.4,182.1 152.5,183.8 152.5,176.6 152.6,188.0 152.6,195.5 152.7,178.1 152.8,177.6 152.8,191.8 152.9,178.3 152.9,178.1 153.0,181.1 153.0,174.1 153.1,180.4 153.1,189.5 153.2,180.2 153.3,178.6 153.3,174.0 153.4,181.3 153.4,180.6 153.5,173.1 153.5,185.1 153.6,178.0 153.7,185.2 153.7,200.0 153.8,191.3 153.8,183.4 153.9,188.3 153.9,172.1 154.0,178.1 154.0,178.1 154.1,184.3 154.2,183.0 154.2,175.2 154.3,186.4 154.3,178.2 154.4,177.0 154.4,181.0 154.5,175.6 154.5,181.5 154.6,180.9 154.7,183.4 154.7,188.3 154.8,175.1 154.8,176.8 154.9,177.6 154.9,180.9 155.0,173.6 155.0,178.1 155.1,172.5 155.2,185.9 155.2,182.3 155.3,177.7 155.3,176.2 155.4,180.4 155.4,182.9 155.5,179.0 155.6,179.8 155.6,178.3 155.7,173.0 155.7,185.3 155.8,182.5 155.8,173.8 155.9,190.1 155.9,175.7 156.0,179.4 156.1,180.3 156.1,179.6 156.2,178.6 156.2,185.5 156.3,196.5 156.3,184.5 156.4,176.7 156.4,181.7 156.5,180.4 156.6,172.8 156.6,180.9 156.7,181.1 156.7,183.4 156.8,177.6 156.8,178.8 156.9,175.4 156.9,177.2 157.0,178.1 157.1,183.5 157.1,174.1 157.2,174.2 157.2,174.2 157.3,176.5 157.3,175.4 157.4,186.8 157.5,183.2 157.5,174.2 157.6,180.5 157.6,178.0 157.7,174.8 157.7,188.2 157.8,176.1 157.8,172.2 157.9,188.9 158.0,176.3 158.0,177.6 158.1,176.8 158.1,171.9 158.2,175.7 158.2,184.0 158.3,176.0 158.3,179.0 158.4,175.8 158.5,186.1 158.5,186.4 158.6,182.1 158.6,188.2 158.7,174.3 158.7,178.5 158.8,171.0 158.9,174.2 158.9,175.9 159.0,171.2 159.0,172.1 159.1,175.8 159.1,175.4 159.2,172.6 159.2,177.7 159.3,170.5 159.4,169.9 159.4,174.5 159.5,170.2 159.5,188.2 159.6,172.5 159.6,187.8 159.7,175.8 159.7,187.6 159.8,178.8 159.9,174.5 159.9,189.6 160.0,174.9 160.0,173.4 160.1,174.4 160.1,171.3 160.2,180.2 160.2,179.5 160.3,173.0 160.4,181.2 160.4,189.1 160.5,176.5 160.5,182.9 160.6,176.7 160.6,174.7 160.7,179.2 160.8,173.4 160.8,176.9 160.9,179.7 160.9,180.8 161.0,184.0 161.0,181.7 161.1,173.6 161.1,175.4 161.2,175.1 161.3,185.8 161.3,171.0 161.4,176.6 161.4,167.8 161.5,175.9 161.5,181.2 161.6,176.1 161.6,176.4 161.7,173.2 161.8,186.6 161.8,179.7 161.9,176.1 161.9,180.1 162.0,179.7 162.0,173.6 162.1,174.6 162.1,181.1 162.2,186.5 162.3,191.5 162.3,169.7 162.4,176.7 162.4,179.3 162.5,179.6 162.5,179.2 162.6,174.9 162.7,187.7 162.7,170.8 162.8,173.9 162.8,172.5 162.9,173.5 162.9,174.5 163.0,178.8 163.0,170.1 163.1,195.7 163.2,171.4 163.2,173.9 163.3,196.4 163.3,181.6 163.4,169.7 163.4,171.9 163.5,176.4 163.5,169.8 163.6,173.6 163.7,171.6 163.7,187.0 163.8,169.9 163.8,179.2 163.9,177.3 163.9,172.7 164.0,176.5 164.1,174.6 164.1,172.6 164.2,170.5 164.2,177.3 164.3,172.6 164.3,179.0 164.4,173.3 164.4,178.4 164.5,178.5 164.6,178.5 164.6,185.3 164.7,176.4 164.7,176.9 164.8,178.5 164.8,173.3 164.9,176.3 164.9,174.0 165.0,193.5 165.1,168.7 165.1,166.8 165.2,171.3 165.2,168.3 165.3,177.1 165.3,177.6 165.4,169.4 165.4,166.6 165.5,179.5 165.6,177.4 165.6,188.2 165.7,166.0 165.7,174.6 165.8,191.5 165.8,170.6 165.9,170.0 166.0,194.5 166.0,169.8 166.1,178.1 166.1,172.0 166.2,172.7 166.2,171.2 166.3,172.3 166.3,186.1 166.4,183.4 166.5,165.7 166.5,176.5 166.6,170.5 166.6,173.2 166.7,174.2 166.7,167.7 166.8,169.2 166.8,176.1 166.9,178.6 167.0,176.6 167.0,172.0 167.1,178.1 167.1,192.6 167.2,181.5 167.2,177.7 167.3,170.3 167.3,172.2 167.4,180.8 167.5,176.7 167.5,172.3 167.6,170.2 167.6,164.9 167.7,174.9 167.7,172.7 167.8,171.8 167.9,169.7 167.9,170.3 168.0,175.8 168.0,169.5 168.1,183.9 168.1,172.2 168.2,177.0 168.2,169.5 168.3,174.8 168.4,175.7 168.4,171.7 168.5,171.6 168.5,173.2 168.6,170.4 168.6,166.3 168.7,171.3 168.7,169.2 168.8,164.6 168.9,167.0 168.9,171.1 169.0,170.7 169.0,166.9 169.1,175.5 169.1,164.5 169.2,183.4 169.3,172.7 169.3,170.0 169.4,168.5 169.4,179.6 169.5,167.3 169.5,170.2 169.6,171.5 169.6,172.0 169.7,177.4 169.8,183.4 169.8,168.9 169.9,167.2 169.9,170.0 170.0,185.0 170.0,164.4 170.1,170.9 170.1,166.6 170.2,162.1 170.3,184.4 170.3,175.8 170.4,166.3 170.4,167.2 170.5,168.9 170.5,165.4 170.6,166.4 170.6,173.9 170.7,168.4 170.8,168.9 170.8,174.6 170.9,169.4 170.9,178.2 171.0,173.7 171.0,172.1 171.1,176.6 171.2,169.4 171.2,179.3 171.3,175.5 171.3,168.7 171.4,163.7 171.4,188.0 171.5,170.9 171.5,171.9 171.6,184.9 171.7,175.3 171.7,163.9 171.8,177.2 171.8,162.4 171.9,168.7 171.9,174.8 172.0,165.5 172.0,162.7 172.1,160.2 172.2,174.4 172.2,181.8 172.3,165.2 172.3,164.9 172.4,175.6 172.4,178.3 172.5,165.9 172.5,172.4 172.6,169.7 172.7,171.3 172.7,170.7 172.8,170.8 172.8,174.7 172.9,179.0 172.9,162.4 173.0,190.2 173.1,166.6 173.1,164.8 173.2,165.5 173.2,172.3 173.3,170.1 173.3,167.5 173.4,167.6 173.4,170.5 173.5,172.4 173.6,163.4 173.6,165.1 173.7,171.4 173.7,172.8 173.8,168.7 173.8,163.7 173.9,170.7 173.9,161.7 174.0,174.0 174.1,166.7 174.1,178.6 174.2,169.9 174.2,178.0 174.3,171.4 174.3,173.9 174.4,177.0 174.5,168.5 174.5,170.3 174.6,163.3 174.6,176.5 174.7,169.1 174.7,164.6 174.8,172.3 174.8,165.8 174.9,160.7 175.0,166.7 175.0,165.0 175.1,165.5 175.1,167.2 175.2,178.6 175.2,174.7 175.3,166.8 175.3,167.0 175.4,166.1 175.5,194.3 175.5,170.1 175.6,171.6 175.6,171.6 175.7,167.6 175.7,163.2 175.8,171.2 175.8,167.2 175.9,176.2 176.0,172.9 176.0,162.3 176.1,175.5 176.1,166.1 176.2,166.1 176.2,165.8 176.3,164.1 176.4,174.6 176.4,172.6 176.5,165.6 176.5,174.8 176.6,172.9 176.6,165.5 176.7,165.9 176.7,174.6 176.8,182.7 176.9,166.5 176.9,172.3 177.0,165.9 177.0,172.2 177.1,168.3 177.1,177.8 177.2,172.2 177.2,162.4 177.3,162.3 177.4,167.4 177.4,165.4 177.5,167.6 177.5,167.1 177.6,171.5 177.6,167.4 177.7,180.6 177.7,184.8 177.8,164.8 177.9,166.5 177.9,165.9 178.0,171.9 178.0,167.5 178.1,166.0 178.1,172.0 178.2,162.9 178.3,160.6 178.3,168.1 178.4,166.4 178.4,166.3 178.5,169.3 178.5,167.2 178.6,171.7 178.6,163.8 178.7,182.3 178.8,189.3 178.8,164.7 178.9,169.2 178.9,161.2 179.0,163.8 179.0,163.0 179.1,160.9 179.1,170.4 179.2,163.1 179.3,160.8 179.3,157.8 179.4,180.0 179.4,176.1 179.5,173.5 179.5,167.8 179.6,168.7 179.7,162.7 179.7,173.3 179.8,170.0 179.8,165.5 179.9,169.1 179.9,167.2 180.0,169.1 180.0,170.2 180.1,169.2 180.2,164.1 180.2,160.6 180.3,161.0 180.3,172.4 180.4,169.4 180.4,164.3 180.5,162.7 180.5,166.0 180.6,172.7 180.7,184.1 180.7,175.0 180.8,164.4 180.8,163.5 180.9,166.7 180.9,158.8 181.0,170.1 181.0,167.2 181.1,165.2 181.2,161.2 181.2,162.3 181.3,159.6 181.3,166.0 181.4,167.6 181.4,167.7 181.5,168.5 181.6,175.9 181.6,157.3 181.7,165.5 181.7,156.6 181.8,164.9 181.8,165.6 181.9,162.6 181.9,166.1 182.0,162.9 182.1,169.9 182.1,163.9 182.2,156.6 182.2,163.7 182.3,161.1 182.3,158.9 182.4,166.9 182.4,163.1 182.5,167.0 182.6,163.4 182.6,161.5 182.7,171.2 182.7,163.8 182.8,161.4 182.8,156.3 182.9,168.2 182.9,159.8 183.0,166.5 183.1,168.9 183.1,164.3 183.2,162.1 183.2,174.0 183.3,169.1 183.3,175.5 183.4,161.0 183.5,167.9 183.5,161.1 183.6,164.3 183.6,165.8 183.7,156.0 183.7,169.5 183.8,158.7 183.8,168.6 183.9,166.6 184.0,158.7 184.0,160.9 184.1,167.3 184.1,157.1 184.2,164.5 184.2,157.8 184.3,169.4 184.3,165.4 184.4,158.8 184.5,160.5 184.5,157.9 184.6,166.4 184.6,159.2 184.7,157.6 184.7,160.1 184.8,160.4 184.9,164.8 184.9,159.1 185.0,157.8 185.0,161.5 185.1,160.3 185.1,155.8 185.2,169.2 185.2,160.9 185.3,163.7 185.4,167.7 185.4,164.3 185.5,157.2 185.5,167.2 185.6,160.2 185.6,160.3 185.7,164.4 185.7,171.5 185.8,160.9 185.9,160.6 185.9,169.7 186.0,161.1 186.0,161.8 186.1,162.6 186.1,154.0 186.2,155.7 186.2,152.0 186.3,171.6 186.4,174.5 186.4,161.8 186.5,151.7 186.5,156.8 186.6,160.1 186.6,157.2 186.7,161.1 186.8,161.5 186.8,169.3 186.9,169.7 186.9,157.5 187.0,163.4 187.0,170.7 187.1,169.8 187.1,171.6 187.2,155.4 187.3,161.3 187.3,161.9 187.4,161.7 187.4,161.9 187.5,170.7 187.5,161.2 187.6,157.5 187.6,158.9 187.7,163.7 187.8,180.0 187.8,161.8 187.9,153.8 187.9,157.1 188.0,158.8 188.0,156.4 188.1,156.0 188.1,165.1 188.2,158.4 188.3,153.3 188.3,161.9 188.4,161.8 188.4,163.2 188.5,152.3 188.5,154.8 188.6,161.8 188.7,157.0 188.7,153.6 188.8,152.8 188.8,170.6 188.9,160.4 188.9,153.1 189.0,160.2 189.0,165.9 189.1,156.3 189.2,170.3 189.2,152.5 189.3,155.8 189.3,150.4 189.4,166.0 189.4,158.0 189.5,164.5 189.5,159.2 189.6,158.4 189.7,165.2 189.7,163.0 189.8,189.2 189.8,165.0 189.9,157.7 189.9,164.2 190.0,180.1 190.1,159.0 190.1,160.4 190.2,158.9 190.2,153.7 190.3,158.3 190.3,161.0 190.4,162.4 190.4,153.1 190.5,167.4 190.6,155.4 190.6,160.4 190.7,154.3 190.7,162.7 190.8,153.1 190.8,164.2 190.9,154.3 190.9,162.6 191.0,155.7 191.1,159.3 191.1,158.2 191.2,158.3 191.2,166.5 191.3,149.2 191.3,156.4 191.4,161.3 191.4,160.4 191.5,157.4 191.6,156.8 191.6,155.1 191.7,159.2 191.7,158.6 191.8,149.7 191.8,154.1 191.9,156.0 192.0,157.1 192.0,159.5 192.1,149.8 192.1,159.8 192.2,150.9 192.2,151.8 192.3,162.1 192.3,159.4 192.4,158.3 192.5,163.3 192.5,153.6 192.6,157.6 192.6,158.3 192.7,164.0 192.7,164.9 192.8,157.4 192.8,158.7 192.9,163.2 193.0,152.9 193.0,152.3 193.1,151.5 193.1,156.1 193.2,151.4 193.2,167.4 193.3,152.3 193.3,156.6 193.4,158.2 193.5,150.1 193.5,164.3 193.6,166.9 193.6,153.2 193.7,152.4 193.7,157.1 193.8,156.1 193.9,155.6 193.9,151.2 194.0,154.8 194.0,165.5 194.1,160.6 194.1,150.2 194.2,154.6 194.2,157.2 194.3,168.2 194.4,171.7 194.4,168.5 194.5,155.4 194.5,150.4 194.6,153.5 194.6,161.2 194.7,153.7 194.7,173.2 194.8,150.9 194.9,149.0 194.9,164.0 195.0,159.9 195.0,182.6 195.1,166.4 195.1,157.4 195.2,156.2 195.3,161.1 195.3,151.5 195.4,152.9 195.4,166.7 195.5,158.0 195.5,155.3 195.6,169.4 195.6,157.2 195.7,149.1 195.8,155.9 195.8,152.5 195.9,150.8 195.9,153.2 196.0,150.2 196.0,158.2 196.1,165.5 196.1,166.8 196.2,152.4 196.3,162.8 196.3,161.5 196.4,156.5 196.4,153.2 196.5,152.3 196.5,165.5 196.6,157.4 196.6,161.4 196.7,167.0 196.8,158.8 196.8,166.6 196.9,153.8 196.9,154.1 197.0,153.8 197.0,158.8 197.1,149.7 197.2,155.4 197.2,150.7 197.3,154.3 197.3,155.7 197.4,157.9 197.4,154.6 197.5,173.8 197.5,161.3 197.6,159.4 197.7,158.2 197.7,152.0 197.8,149.5 197.8,159.4 197.9,158.6 197.9,153.4 198.0,157.2 198.0,161.7 198.1,147.4 198.2,150.9 198.2,150.9 198.3,154.6 198.3,158.8 198.4,153.1 198.4,157.2 198.5,166.9 198.6,154.2 198.6,154.4 198.7,153.4 198.7,148.7 198.8,156.0 198.8,150.0 198.9,151.5 198.9,154.9 199.0,156.3 199.1,149.6 199.1,145.2 199.2,147.8 199.2,147.5 199.3,153.7 199.3,153.5 199.4,156.5 199.4,151.9 199.5,159.9 199.6,149.4 199.6,154.3 199.7,159.7 199.7,155.6 199.8,150.8 199.8,147.7 199.9,151.6 199.9,147.7 200.0,145.0 200.1,157.3 200.1,147.2 200.2,155.3 200.2,151.3 200.3,156.6 200.3,153.3 200.4,152.3 200.5,155.0 200.5,144.1 200.6,148.1 200.6,161.8 200.7,163.4 200.7,170.4 200.8,149.2 200.8,156.6 200.9,145.4 201.0,150.0 201.0,148.8 201.1,159.1 201.1,150.4 201.2,169.6 201.2,146.4 201.3,149.7 201.3,151.9 201.4,158.5 201.5,150.2 201.5,150.6 201.6,151.0 201.6,154.0 201.7,148.9 201.7,149.6 201.8,150.2 201.8,143.7 201.9,147.8 202.0,147.5 202.0,149.2 202.1,144.2 202.1,149.1 202.2,146.5 202.2,162.2 202.3,154.9 202.4,143.0 202.4,160.4 202.5,157.4 202.5,146.8 202.6,148.1 202.6,157.9 202.7,146.6 202.7,147.8 202.8,153.6 202.9,144.9 202.9,155.6 203.0,156.9 203.0,157.4 203.1,148.7 203.1,143.2 203.2,141.2 203.2,169.7 203.3,164.0 203.4,152.1 203.4,148.1 203.5,150.8 203.5,145.5 203.6,144.4 203.6,145.1 203.7,148.3 203.8,169.4 203.8,157.1 203.9,142.5 203.9,146.1 204.0,153.4 204.0,151.8 204.1,155.4 204.1,146.3 204.2,153.4 204.3,148.7 204.3,152.8 204.4,155.9 204.4,143.8 204.5,149.4 204.5,151.1 204.6,150.1 204.6,148.4 204.7,153.6 204.8,141.1 204.8,156.4 204.9,147.0 204.9,145.6 205.0,147.7 205.0,149.0 205.1,158.6 205.1,160.5 205.2,147.7 205.3,157.5 205.3,148.6 205.4,153.8 205.4,145.6 205.5,151.9 205.5,145.9 205.6,157.1 205.7,148.4 205.7,149.7 205.8,145.2 205.8,145.4 205.9,142.5 205.9,146.4 206.0,152.5 206.0,141.2 206.1,139.8 206.2,141.6 206.2,144.7 206.3,151.3 206.3,145.7 206.4,142.7 206.4,150.7 206.5,146.6 206.5,155.7 206.6,157.4 206.7,148.2 206.7,156.9 206.8,153.1 206.8,150.2 206.9,144.0 206.9,144.5 207.0,143.8 207.0,149.8 207.1,146.9 207.2,152.4 207.2,159.4 207.3,147.4 207.3,154.1 207.4,149.9 207.4,146.1 207.5,142.5 207.6,148.1 207.6,145.5 207.7,145.5 207.7,156.2 207.8,160.8 207.8,148.8 207.9,147.2 207.9,152.2 208.0,152.8 208.1,147.8 208.1,148.2 208.2,138.8 208.2,157.1 208.3,143.9 208.3,142.9 208.4,150.8 208.4,139.7 208.5,146.9 208.6,141.6 208.6,157.6 208.7,149.5 208.7,141.2 208.8,139.0 208.8,149.9 208.9,140.4 209.0,155.2 209.0,161.5 209.1,147.7 209.1,146.4 209.2,142.9 209.2,152.9 209.3,139.4 209.3,140.0 209.4,141.5 209.5,140.8 209.5,147.9 209.6,154.5 209.6,144.7 209.7,153.1 209.7,151.0 209.8,146.2 209.8,143.9 209.9,141.4 210.0,146.7 210.0,143.4 210.1,139.6 210.1,138.6 210.2,143.0 210.2,142.4 210.3,145.0 210.3,143.9 210.4,142.0 210.5,144.2 210.5,150.5 210.6,152.4 210.6,144.6 210.7,138.4 210.7,143.9 210.8,155.4 210.9,141.0 210.9,158.3 211.0,142.9 211.0,143.1 211.1,143.1 211.1,164.7 211.2,159.1 211.2,146.1 211.3,148.8 211.4,145.2 211.4,143.8 211.5,156.8 211.5,150.7 211.6,144.8 211.6,137.4 211.7,149.8 211.7,142.4 211.8,137.3 211.9,149.9 211.9,142.9 212.0,146.4 212.0,141.6 212.1,140.3 212.1,151.3 212.2,141.6 212.2,147.7 212.3,137.6 212.4,155.8 212.4,144.8 212.5,135.0 212.5,161.6 212.6,144.0 212.6,147.3 212.7,144.9 212.8,151.5 212.8,137.0 212.9,151.2 212.9,142.1 213.0,134.7 213.0,149.1 213.1,146.5 213.1,140.3 213.2,159.6 213.3,141.7 213.3,146.8 213.4,146.6 213.4,140.5 213.5,153.7 213.5,151.7 213.6,143.1 213.6,137.5 213.7,150.1 213.8,144.8 213.8,160.8 213.9,144.1 213.9,145.7 214.0,139.5 214.0,138.9 214.1,142.2 214.2,135.9 214.2,142.2 214.3,146.3 214.3,144.0 214.4,143.0 214.4,137.9 214.5,138.9 214.5,136.6 214.6,139.0 214.7,150.0 214.7,144.5 214.8,155.4 214.8,137.2 214.9,156.9 214.9,144.1 215.0,140.8 215.0,133.7 215.1,135.1 215.2,149.1 215.2,143.8 215.3,143.4 215.3,149.7 215.4,138.4 215.4,139.5 215.5,142.3 215.5,136.5 215.6,143.6 215.7,141.1 215.7,139.9 215.8,146.0 215.8,145.4 215.9,142.8 215.9,144.2 216.0,149.7 216.1,139.7 216.1,147.0 216.2,141.3 216.2,151.6 216.3,138.9 216.3,139.5 216.4,136.4 216.4,141.1 216.5,133.9 216.6,152.3 216.6,140.8 216.7,141.9 216.7,142.5 216.8,141.1 216.8,135.4 216.9,140.2 216.9,143.1 217.0,141.6 217.1,142.0 217.1,157.0 217.2,141.6 217.2,134.5 217.3,133.8 217.3,136.0 217.4,141.8 217.4,135.2 217.5,141.6 217.6,139.4 217.6,140.3 217.7,146.8 217.7,134.4 217.8,138.7 217.8,135.7 217.9,146.9 218.0,133.8 218.0,137.1 218.1,147.4 218.1,148.8 218.2,135.5 218.2,143.6 218.3,147.4 218.3,132.0 218.4,144.0 218.5,135.2 218.5,136.6 218.6,138.0 218.6,140.0 218.7,144.5 218.7,138.0 218.8,138.8 218.8,135.0 218.9,144.3 219.0,130.2 219.0,137.6 219.1,134.1 219.1,135.9 219.2,138.3 219.2,139.7 219.3,137.2 219.4,149.8 219.4,154.0 219.5,143.0 219.5,140.2 219.6,159.5 219.6,144.5 219.7,145.0 219.7,131.8 219.8,137.7 219.9,139.8 219.9,135.7 220.0,137.8 220.0,131.7 220.1,145.4 220.1,135.6 220.2,149.4 220.2,160.4 220.3,134.8 220.4,148.7 220.4,140.7 220.5,142.9 220.5,144.8 220.6,143.0 220.6,133.6 220.7,139.2 220.7,141.8 220.8,139.6 220.9,141.8 220.9,143.8 221.0,135.4 221.0,137.1 221.1,138.6 221.1,133.7 221.2,148.9 221.3,137.9 221.3,131.3 221.4,142.6 221.4,157.6 221.5,144.8 221.5,134.3 221.6,148.6 221.6,148.8 221.7,135.4 221.8,155.7 221.8,148.8 221.9,135.6 221.9,136.8 222.0,152.1 222.0,131.1 222.1,143.2 222.1,137.6 222.2,136.4 222.3,144.4 222.3,136.3 222.4,132.9 222.4,132.0 222.5,141.8 222.5,132.2 222.6,137.6 222.6,133.6 222.7,135.3 222.8,140.6 222.8,138.5 222.9,133.6 222.9,139.3 223.0,132.0 223.0,132.0 223.1,136.2 223.2,136.9 223.2,134.2 223.3,131.7 223.3,144.4 223.4,146.1 223.4,128.9 223.5,135.4 223.5,139.1 223.6,135.6 223.7,138.0 223.7,143.1 223.8,139.5 223.8,142.3 223.9,130.8 223.9,146.0 224.0,137.4 224.0,137.8 224.1,136.7 224.2,143.0 224.2,131.2 224.3,135.4 224.3,138.0 224.4,132.8 224.4,130.5 224.5,128.3 224.6,128.3 224.6,140.9 224.7,138.6 224.7,136.1 224.8,130.2 224.8,133.7 224.9,130.0 224.9,127.0 225.0,128.3 225.1,131.0 225.1,139.8 225.2,137.3 225.2,132.7 225.3,122.7 225.3,129.0 225.4,132.3 225.4,132.1 225.5,133.4 225.6,133.4 225.6,142.1 225.7,132.3 225.7,151.2 225.8,131.6 225.8,126.8 225.9,139.8 225.9,130.6 226.0,132.9 226.1,136.8 226.1,131.1 226.2,141.4 226.2,132.9 226.3,127.0 226.3,127.7 226.4,135.3 226.5,132.9 226.5,132.1 226.6,150.2 226.6,134.7 226.7,129.1 226.7,134.0 226.8,144.2 226.8,128.6 226.9,129.6 227.0,133.0 227.0,131.0 227.1,132.2 227.1,128.0 227.2,129.3 227.2,161.6 227.3,130.2 227.3,138.0 227.4,133.2 227.5,130.9 227.5,128.1 227.6,126.9 227.6,133.5 227.7,127.0 227.7,125.3 227.8,133.7 227.8,128.3 227.9,139.3 228.0,153.7 228.0,126.1 228.1,130.5 228.1,132.6 228.2,133.1 228.2,143.8 228.3,126.7 228.4,136.3 228.4,122.6 228.5,133.1 228.5,129.9 228.6,124.5 228.6,142.1 228.7,127.0 228.7,134.1 228.8,131.2 228.9,125.4 228.9,128.9 229.0,143.7 229.0,133.4 229.1,139.3 229.1,147.1 229.2,131.1 229.2,133.5 229.3,127.4 229.4,131.2 229.4,138.0 229.5,123.0 229.5,136.4 229.6,128.4 229.6,132.4 229.7,137.0 229.8,130.3 229.8,130.8 229.9,155.3 229.9,123.5 230.0,124.5 230.0,132.3 230.1,130.1 230.1,124.6 230.2,122.9 230.3,121.2 230.3,129.1 230.4,125.8 230.4,125.8 230.5,122.8 230.5,130.6 230.6,126.3 230.6,125.3 230.7,121.5 230.8,132.5 230.8,128.4 230.9,123.1 230.9,128.5 231.0,126.3 231.0,133.2 231.1,131.1 231.1,139.7 231.2,122.5 231.3,135.7 231.3,129.6 231.4,129.8 231.4,131.3 231.5,142.1 231.5,129.3 231.6,129.9 231.7,134.4 231.7,130.7 231.8,127.6 231.8,129.1 231.9,122.9 231.9,136.8 232.0,120.7 232.0,126.7 232.1,122.8 232.2,126.1 232.2,128.7 232.3,119.8 232.3,122.0 232.4,122.0 232.4,118.9 232.5,126.6 232.5,132.2 232.6,131.1 232.7,123.5 232.7,123.6 232.8,133.9 232.8,125.1 232.9,123.8 232.9,133.7 233.0,117.9 233.0,120.2 233.1,120.8 233.2,131.2 233.2,127.1 233.3,129.0 233.3,138.1 233.4,127.6 233.4,132.9 233.5,123.6 233.6,127.4 233.6,122.9 233.7,128.6 233.7,126.0 233.8,121.5 233.8,127.1 233.9,118.7 233.9,126.8 234.0,123.3 234.1,131.9 234.1,137.2 234.2,120.9 234.2,119.7 234.3,118.8 234.3,123.4 234.4,120.0 234.4,118.9 234.5,125.0 234.6,132.4 234.6,126.0 234.7,130.2 234.7,120.2 234.8,125.4 234.8,126.1 234.9,121.7 235.0,120.2 235.0,119.0 235.1,119.3 235.1,124.5 235.2,115.2 235.2,123.3 235.3,117.5 235.3,134.0 235.4,131.8 235.5,126.2 235.5,125.2 235.6,121.8 235.6,119.9 235.7,126.0 235.7,118.7 235.8,133.5 235.8,151.9 235.9,120.8 236.0,121.7 236.0,116.9 236.1,128.5 236.1,116.7 236.2,135.0 236.2,120.8 236.3,116.9 236.3,130.9 236.4,116.8 236.5,147.8 236.5,122.9 236.6,126.6 236.6,121.9 236.7,131.5 236.7,130.8 236.8,115.2 236.9,124.4 236.9,134.1 237.0,126.1 237.0,122.5 237.1,119.5 237.1,117.2 237.2,115.3 237.2,141.3 237.3,127.0 237.4,118.8 237.4,119.5 237.5,125.3 237.5,122.9 237.6,130.3 237.6,119.1 237.7,122.6 237.7,130.4 237.8,122.2 237.9,132.3 237.9,120.0 238.0,121.8 238.0,121.0 238.1,127.6 238.1,116.7 238.2,118.5 238.2,125.2 238.3,122.8 238.4,142.5 238.4,123.5 238.5,115.1 238.5,129.8 238.6,116.8 238.6,135.7 238.7,133.7 238.8,123.2 238.8,122.6 238.9,122.4 238.9,114.9 239.0,126.7 239.0,115.9 239.1,122.4 239.1,131.1 239.2,120.9 239.3,123.3 239.3,121.6 239.4,125.4 239.4,144.4 239.5,127.5 239.5,122.8 239.6,129.3 239.6,115.3 239.7,122.5 239.8,113.3 239.8,130.0 239.9,117.4 239.9,127.3 240.0,125.6 240.0,117.5 240.1,114.7 240.2,117.9 240.2,123.7 240.3,129.7 240.3,127.5 240.4,120.2 240.4,122.9 240.5,114.2 240.5,118.3 240.6,125.4 240.7,125.8 240.7,119.0 240.8,127.5 240.8,119.9 240.9,121.0 240.9,118.4 241.0,120.6 241.0,127.1 241.1,117.1 241.2,121.8 241.2,121.3 241.3,116.5 241.3,115.3 241.4,109.8 241.4,120.7 241.5,115.1 241.5,111.0 241.6,122.2 241.7,113.9 241.7,131.5 241.8,114.5 241.8,121.1 241.9,127.4 241.9,123.8 242.0,110.8 242.1,121.9 242.1,110.0 242.2,123.0 242.2,115.4 242.3,117.6 242.3,113.5 242.4,123.3 242.4,119.9 242.5,120.0 242.6,116.4 242.6,116.2 242.7,120.4 242.7,114.6 242.8,122.2 242.8,115.6 242.9,133.5 242.9,112.0 243.0,116.0 243.1,116.9 243.1,134.1 243.2,109.1 243.2,123.6 243.3,116.0 243.3,131.7 243.4,120.2 243.4,115.3 243.5,112.0 243.6,116.5 243.6,116.0 243.7,107.8 243.7,119.3 243.8,122.1 243.8,116.9 243.9,116.5 244.0,111.6 244.0,128.2 244.1,124.0 244.1,114.8 244.2,116.0 244.2,106.6 244.3,119.0 244.3,114.8 244.4,116.8 244.5,111.2 244.5,118.5 244.6,110.8 244.6,109.4 244.7,121.9 244.7,121.2 244.8,114.4 244.8,111.6 244.9,117.6 245.0,121.0 245.0,106.9 245.1,112.8 245.1,110.0 245.2,114.5 245.2,111.2 245.3,105.9 245.4,113.8 245.4,105.9 245.5,113.4 245.5,113.7 245.6,109.1 245.6,111.1 245.7,121.2 245.7,118.5 245.8,108.3 245.9,118.6 245.9,116.8 246.0,113.1 246.0,114.1 246.1,115.1 246.1,112.6 246.2,117.4 246.2,106.0 246.3,122.4 246.4,112.4 246.4,113.9 246.5,109.8 246.5,104.9 246.6,112.9 246.6,109.7 246.7,114.8 246.7,122.5 246.8,104.3 246.9,103.3 246.9,108.1 247.0,118.1 247.0,118.4 247.1,113.3 247.1,113.7 247.2,112.6 247.3,115.8 247.3,104.6 247.4,120.4 247.4,117.5 247.5,104.9 247.5,110.6 247.6,104.8 247.6,113.2 247.7,111.5 247.8,111.0 247.8,117.0 247.9,100.7 247.9,100.2 248.0,109.4 248.0,106.5 248.1,103.1 248.1,110.2 248.2,108.7 248.3,111.7 248.3,104.1 248.4,107.6 248.4,112.7 248.5,113.8 248.5,106.3 248.6,105.9 248.6,104.9 248.7,108.8 248.8,114.5 248.8,107.9 248.9,110.6 248.9,112.8 249.0,106.0 249.0,104.0 249.1,121.8 249.2,102.0 249.2,116.0 249.3,113.8 249.3,109.6 249.4,103.4 249.4,116.0 249.5,106.3 249.5,108.1 249.6,106.1 249.7,112.4 249.7,124.7 249.8,101.1 249.8,109.8 249.9,110.6 249.9,104.1 250.0,110.2 250.0,106.3 250.1,104.0 250.2,108.5 250.2,102.4 250.3,109.3 250.3,112.0 250.4,108.6 250.4,106.2 250.5,104.0 250.6,104.6 250.6,103.7 250.7,104.1 250.7,102.0 250.8,109.1 250.8,108.7 250.9,98.8 250.9,106.8 251.0,99.0 251.1,109.6 251.1,100.0 251.2,96.1 251.2,102.6 251.3,101.4 251.3,96.3 251.4,111.4 251.4,109.5 251.5,112.7 251.6,110.4 251.6,100.8 251.7,98.3 251.7,109.9 251.8,109.6 251.8,104.6 251.9,100.6 251.9,104.9 252.0,104.5 252.1,102.0 252.1,105.7 252.2,115.1 252.2,118.4 252.3,96.1 252.3,107.4 252.4,94.3 252.5,103.4 252.5,101.3 252.6,101.7 252.6,102.2 252.7,105.3 252.7,104.4 252.8,118.1 252.8,112.3 252.9,101.9 253.0,113.7 253.0,97.9 253.1,103.0 253.1,105.1 253.2,103.9 253.2,99.5 253.3,109.9 253.3,94.7 253.4,123.2 253.5,116.3 253.5,112.2 253.6,93.5 253.6,107.4 253.7,104.6 253.7,97.9 253.8,107.6 253.9,101.7 253.9,106.6 254.0,97.5 254.0,100.4 254.1,107.5 254.1,96.6 254.2,97.4 254.2,100.2 254.3,100.1 254.4,103.8 254.4,97.7 254.5,99.6 254.5,100.7 254.6,107.1 254.6,101.4 254.7,94.0 254.7,104.3 254.8,97.5 254.9,96.3 254.9,97.4 255.0,106.1 255.0,100.9 255.1,98.7 255.1,109.4 255.2,103.3 255.2,96.0 255.3,98.3 255.4,104.4 255.4,97.5 255.5,94.2 255.5,107.8 255.6,105.8 255.6,104.9 255.7,99.1 255.8,101.4 255.8,102.4 255.9,94.3 255.9,97.6 256.0,93.4 256.0,94.7 256.1,99.1 256.1,98.0 256.2,99.0 256.3,103.8 256.3,90.8 256.4,104.0 256.4,91.6 256.5,93.5 256.5,92.9 256.6,101.8 256.6,100.6 256.7,115.2 256.8,100.7 256.8,98.1 256.9,100.4 256.9,102.9 257.0,107.5 257.0,98.3 257.1,96.0 257.1,101.7 257.2,95.3 257.3,94.9 257.3,96.7 257.4,101.8 257.4,98.9 257.5,102.1 257.5,97.2 257.6,94.3 257.7,107.1 257.7,96.3 257.8,106.8 257.8,104.8 257.9,91.3 257.9,93.0 258.0,102.1 258.0,103.1 258.1,107.0 258.2,97.4 258.2,97.4 258.3,101.7 258.3,108.3 258.4,98.8 258.4,97.3 258.5,90.3 258.5,92.9 258.6,94.6 258.7,94.8 258.7,95.9 258.8,93.5 258.8,93.0 258.9,94.1 258.9,99.8 259.0,98.4 259.1,98.6 259.1,100.3 259.2,98.8 259.2,98.5 259.3,100.1 259.3,98.4 259.4,97.5 259.4,97.6 259.5,95.0 259.6,98.6 259.6,94.0 259.7,99.3 259.7,93.7 259.8,101.6 259.8,95.1 259.9,92.4 259.9,88.8 260.0,99.8 260.1,106.0 260.1,94.2 260.2,96.1 260.2,115.5 260.3,101.3 260.3,115.9 260.4,91.3 260.4,102.1 260.5,94.4 260.6,90.2 260.6,94.6 260.7,103.2 260.7,106.3 260.8,101.5 260.8,96.9 260.9,103.8 261.0,97.3 261.0,90.9 261.1,94.7 261.1,93.9 261.2,98.3 261.2,93.2 261.3,92.2 261.3,105.4 261.4,98.3 261.5,115.2 261.5,91.6 261.6,110.5 261.6,95.2 261.7,101.8 261.7,96.2 261.8,102.0 261.8,100.4 261.9,90.1 262.0,96.1 262.0,94.2 262.1,98.2 262.1,105.8 262.2,99.6 262.2,113.5 262.3,95.2 262.3,113.9 262.4,99.1 262.5,100.0 262.5,91.0 262.6,94.6 262.6,100.0 262.7,101.0 262.7,96.8 262.8,93.8 262.9,91.5 262.9,105.5 263.0,90.7 263.0,89.8 263.1,94.4 263.1,92.9 263.2,88.6 263.2,110.3 263.3,105.2 263.4,90.2 263.4,89.2 263.5,112.1 263.5,110.8 263.6,115.3 263.6,98.3 263.7,97.0 263.7,93.0 263.8,93.5 263.9,102.4 263.9,92.0 264.0,95.8 264.0,92.6 264.1,100.7 264.1,97.6 264.2,96.2 264.3,115.7 264.3,98.4 264.4,97.6 264.4,95.5 264.5,101.8 264.5,103.0 264.6,90.7 264.6,86.2 264.7,87.0 264.8,93.6 264.8,108.4 264.9,113.3 264.9,96.1 265.0,99.3 265.0,100.4 265.1,92.9 265.1,89.1 265.2,96.2 265.3,91.2 265.3,98.3 265.4,98.5 265.4,101.7 265.5,91.2 265.5,93.0 265.6,106.4 265.6,95.6 265.7,103.5 265.8,107.3 265.8,102.2 265.9,92.4 265.9,99.4 266.0,93.0 266.0,92.7 266.1,96.7 266.2,86.8 266.2,98.0 266.3,93.1 266.3,93.1 266.4,97.6 266.4,97.5 266.5,90.8 266.5,90.3 266.6,97.8 266.7,93.5 266.7,96.0 266.8,95.5 266.8,97.5 266.9,87.8 266.9,96.9 267.0,101.3 267.0,94.1 267.1,93.1 267.2,87.1 267.2,92.3 267.3,99.8 267.3,104.8 267.4,96.9 267.4,98.0 267.5,95.6 267.5,95.4 267.6,95.8 267.7,92.6 267.7,85.8 267.8,101.6 267.8,92.7 267.9,93.1 267.9,97.1 268.0,94.2 268.1,98.1 268.1,90.9 268.2,96.5 268.2,86.2 268.3,96.7 268.3,90.1 268.4,90.6 268.4,93.7 268.5,95.7 268.6,95.6 268.6,96.8 268.7,92.2 268.7,90.1 268.8,92.9 268.8,92.8 268.9,102.1 268.9,95.2 269.0,90.9 269.1,87.8 269.1,99.5 269.2,98.3 269.2,90.9 269.3,95.2 269.3,102.5 269.4,97.6 269.5,84.2 269.5,101.1 269.6,95.8 269.6,87.7 269.7,92.0 269.7,90.6 269.8,86.6 269.8,99.2 269.9,91.9 270.0,98.6 270.0,100.5 270.1,101.3 270.1,91.9 270.2,100.1 270.2,90.0 270.3,96.6 270.3,101.3 270.4,89.4 270.5,91.2 270.5,100.6 270.6,96.6 270.6,93.1 270.7,95.4 270.7,100.5 270.8,93.8 270.8,89.9 270.9,86.2 271.0,94.1 271.0,95.2 271.1,96.2 271.1,108.4 271.2,89.8 271.2,119.8 271.3,90.6 271.4,88.4 271.4,95.9 271.5,96.2 271.5,93.4 271.6,96.9 271.6,94.4 271.7,93.4 271.7,89.3 271.8,93.0 271.9,92.0 271.9,101.3 272.0,99.9 272.0,104.3 272.1,98.3 272.1,89.4 272.2,90.4 272.2,96.7 272.3,90.9 272.4,96.8 272.4,91.1 272.5,94.8 272.5,95.5 272.6,86.5 272.6,87.6 272.7,110.4 272.7,90.6 272.8,93.5 272.9,87.9 272.9,96.1 273.0,93.0 273.0,100.2 273.1,93.4 273.1,94.5 273.2,94.3 273.3,100.2 273.3,93.8 273.4,87.2 273.4,99.1 273.5,89.6 273.5,99.9 273.6,106.5 273.6,94.7 273.7,93.4 273.8,87.2 273.8,110.2 273.9,92.4 273.9,91.0 274.0,94.5 274.0,90.5 274.1,99.5 274.1,95.0 274.2,103.1 274.3,90.5 274.3,106.7 274.4,104.1 274.4,89.2 274.5,93.3 274.5,95.2 274.6,102.5 274.7,99.9 274.7,89.8 274.8,96.5 274.8,92.5 274.9,94.6 274.9,97.8 275.0,85.9 275.0,98.3 275.1,94.6 275.2,92.4 275.2,92.5 275.3,95.2 275.3,100.6 275.4,94.8 275.4,90.5 275.5,105.4 275.5,93.0 275.6,91.5 275.7,90.6 275.7,99.6 275.8,99.1 275.8,90.2 275.9,90.9 275.9,87.1 276.0,94.1 276.0,100.1 276.1,96.3 276.2,93.3 276.2,98.5 276.3,88.3 276.3,91.0 276.4,104.3 276.4,95.1 276.5,98.6 276.6,93.9 276.6,119.4 276.7,96.5 276.7,94.6 276.8,99.1 276.8,88.4 276.9,90.3 276.9,90.8 277.0,107.0 277.1,96.1 277.1,88.1 277.2,103.8 277.2,101.5 277.3,94.2 277.3,93.6 277.4,87.9 277.4,90.4 277.5,85.5 277.6,89.3 277.6,86.5 277.7,89.2 277.7,93.0 277.8,93.6 277.8,94.0 277.9,99.5 277.9,107.6 278.0,101.3 278.1,98.7 278.1,88.8 278.2,94.5 278.2,96.5 278.3,100.4 278.3,99.3 278.4,88.7 278.5,101.1 278.5,98.7 278.6,97.2 278.6,92.2 278.7,90.9 278.7,88.9 278.8,93.0 278.8,97.1 278.9,99.1 279.0,107.4 279.0,89.5 279.1,91.4 279.1,97.9 279.2,89.5 279.2,90.3 279.3,103.9 279.3,93.7 279.4,90.0 279.5,92.1 279.5,103.1 279.6,100.3 279.6,94.8 279.7,88.1 279.7,108.2 279.8,95.1 279.9,91.1 279.9,89.8 280.0,104.5 280.0,104.5 280.1,91.8 280.1,97.5 280.2,94.7 280.2,94.6 280.3,104.5 280.4,91.2 280.4,106.7 280.5,98.7 280.5,95.7 280.6,97.3 280.6,87.6 280.7,85.7 280.7,91.5 280.8,92.0 280.9,109.1 280.9,93.7 281.0,96.1 281.0,105.3 281.1,84.4 281.1,114.6 281.2,92.0 281.2,100.7 281.3,86.0 281.4,91.2 281.4,102.6 281.5,92.8 281.5,94.6 281.6,92.2 281.6,109.6 281.7,94.0 281.8,89.3 281.8,121.1 281.9,96.2 281.9,91.7 282.0,108.1 282.0,86.4 282.1,90.4 282.1,89.8 282.2,89.9 282.3,88.2 282.3,89.6 282.4,95.8 282.4,93.6 282.5,94.1 282.5,96.4 282.6,95.7 282.6,96.0 282.7,93.7 282.8,89.7 282.8,94.6 282.9,85.4 282.9,90.1 283.0,96.7 283.0,90.4 283.1,101.2 283.1,94.2 283.2,98.1 283.3,93.0 283.3,88.8 283.4,95.5 283.4,87.3 283.5,95.8 283.5,102.6 283.6,98.7 283.7,95.7 283.7,93.2 283.8,97.5 283.8,97.2 283.9,85.6 283.9,96.5 284.0,93.9 284.0,95.9 284.1,92.6 284.2,95.9 284.2,94.7 284.3,103.9 284.3,89.2 284.4,98.8 284.4,94.2 284.5,89.0 284.5,91.2 284.6,93.0 284.7,87.8 284.7,102.3 284.8,95.4 284.8,94.8 284.9,98.5 284.9,88.3 285.0,90.5 285.1,93.8 285.1,92.5 285.2,93.8 285.2,88.7 285.3,87.1 285.3,86.2 285.4,92.3 285.4,88.9 285.5,91.1 285.6,104.4 285.6,88.0 285.7,99.2 285.7,93.1 285.8,96.0 285.8,96.7 285.9,93.9 285.9,95.7 286.0,99.5 286.1,93.4 286.1,89.0 286.2,88.3 286.2,89.9 286.3,92.2 286.3,93.6 286.4,99.5 286.4,98.2 286.5,94.0 286.6,94.0 286.6,90.7 286.7,96.4 286.7,96.3 286.8,90.8 286.8,89.7 286.9,94.4 287.0,90.7 287.0,86.3 287.1,90.9 287.1,94.9 287.2,93.9 287.2,101.0 287.3,96.1 287.3,87.7 287.4,100.5 287.5,97.7 287.5,94.0 287.6,99.4 287.6,99.7 287.7,85.9 287.7,115.3 287.8,90.6 287.8,87.4 287.9,118.1 288.0,98.8 288.0,95.6 288.1,92.3 288.1,102.4 288.2,92.2 288.2,87.2 288.3,94.7 288.3,98.0 288.4,89.8 288.5,87.8 288.5,94.8 288.6,94.7 288.6,98.4 288.7,98.6 288.7,87.1 288.8,99.9 288.9,97.4 288.9,92.4 289.0,86.9 289.0,100.7 289.1,90.9 289.1,93.0 289.2,85.7 289.2,86.2 289.3,90.9 289.4,88.1 289.4,98.7 289.5,96.9 289.5,103.0 289.6,95.3 289.6,102.4 289.7,89.0 289.7,103.9 289.8,106.3 289.9,93.2 289.9,89.3 290.0,105.4 290.0,92.4 290.1,96.4 290.1,91.2 290.2,104.4 290.3,108.0 290.3,85.1 290.4,88.2 290.4,89.5 290.5,93.0 290.5,87.3 290.6,101.7 290.6,98.5 290.7,93.3 290.8,96.4 290.8,95.9 290.9,92.0 290.9,92.6 291.0,94.2 291.0,98.8 291.1,91.7 291.1,94.1 291.2,102.3 291.3,94.4 291.3,95.5 291.4,96.9 291.4,107.8 291.5,101.5 291.5,104.1 291.6,104.4 291.6,93.9 291.7,105.3 291.8,89.1 291.8,91.7 291.9,92.7 291.9,88.0 292.0,95.1 292.0,87.6 292.1,98.1 292.2,101.5 292.2,115.2 292.3,94.8 292.3,91.6 292.4,90.0 292.4,89.5 292.5,93.1 292.5,94.7 292.6,87.0 292.7,97.5 292.7,98.1 292.8,89.9 292.8,91.9 292.9,90.6 292.9,94.9 293.0,110.6 293.0,93.3 293.1,92.9 293.2,91.5 293.2,94.9 293.3,97.5 293.3,99.3 293.4,94.9 293.4,95.0 293.5,97.1 293.5,93.1 293.6,89.1 293.7,87.2 293.7,93.7 293.8,91.0 293.8,105.6 293.9,98.3 293.9,93.6 294.0,102.0 294.1,104.7 294.1,93.3 294.2,95.1 294.2,96.4 294.3,89.7 294.3,94.0 294.4,97.1 294.4,96.0 294.5,90.5 294.6,91.6 294.6,98.0 294.7,93.6 294.7,89.8 294.8,120.2 294.8,98.6 294.9,95.5 294.9,88.7 295.0,92.3 295.1,100.2 295.1,112.9 295.2,102.9 295.2,99.3 295.3,102.1 295.3,94.3 295.4,90.5 295.5,90.6 295.5,87.8 295.6,96.0 295.6,87.4 295.7,94.3 295.7,95.0 295.8,95.3 295.8,100.7 295.9,96.8 296.0,98.3 296.0,104.1 296.1,88.8 296.1,95.5 296.2,90.6 296.2,102.3 296.3,88.5 296.3,92.2 296.4,100.0 296.5,90.8 296.5,100.3 296.6,100.5 296.6,92.1 296.7,93.9 296.7,93.6 296.8,96.3 296.8,94.9 296.9,99.3 297.0,86.3 297.0,91.2 297.1,93.5 297.1,92.9 297.2,96.6 297.2,93.4 297.3,94.1 297.4,97.0 297.4,96.8 297.5,101.5 297.5,98.9 297.6,96.8 297.6,87.0 297.7,95.9 297.7,94.3 297.8,86.0 297.9,94.5 297.9,95.4 298.0,103.8 298.0,115.6 298.1,102.4 298.1,92.2 298.2,90.9 298.2,88.8 298.3,97.5 298.4,88.8 298.4,96.8 298.5,89.2 298.5,96.7 298.6,96.2 298.6,98.1 298.7,85.8 298.7,88.1 298.8,94.4 298.9,107.3 298.9,88.2 299.0,92.9 299.0,89.5 299.1,101.6 299.1,94.6 299.2,89.4 299.3,95.4 299.3,90.6 299.4,95.7 299.4,93.9 299.5,91.0 299.5,90.8 299.6,96.6 299.6,97.0 299.7,95.4 299.8,92.9 299.8,99.6 299.9,88.2 299.9,95.1 300.0,92.6 300.0,91.8 300.1,90.1 300.1,91.7 300.2,111.3 300.3,118.9 300.3,94.5 300.4,96.1 300.4,90.2 300.5,101.1 300.5,97.0 300.6,93.7 300.7,89.2 300.7,95.1 300.8,90.0 300.8,105.1 300.9,92.9 300.9,95.8 301.0,98.0 301.0,95.0 301.1,93.5 301.2,101.2 301.2,97.3 301.3,88.0 301.3,94.4 301.4,106.3 301.4,97.0 301.5,89.3 301.5,91.7 301.6,103.7 301.7,91.1 301.7,98.3 301.8,94.4 301.8,100.0 301.9,99.2 301.9,89.7 302.0,91.6 302.0,90.6 302.1,96.6 302.2,107.6 302.2,108.6 302.3,99.5 302.3,98.6 302.4,96.8 302.4,97.5 302.5,93.4 302.6,93.5 302.6,101.6 302.7,96.7 302.7,104.1 302.8,99.8 302.8,101.3 302.9,96.7 302.9,92.5 303.0,94.5 303.1,102.5 303.1,102.9 303.2,95.3 303.2,94.0 303.3,101.3 303.3,109.6 303.4,110.1 303.4,97.7 303.5,102.5 303.6,98.2 303.6,104.2 303.7,95.6 303.7,97.9 303.8,105.8 303.8,99.5 303.9,99.3 303.9,94.5 304.0,97.2 304.1,99.1 304.1,98.7 304.2,109.8 304.2,95.9 304.3,98.5 304.3,98.3 304.4,101.1 304.5,96.6 304.5,89.7 304.6,106.9 304.6,99.0 304.7,106.2 304.7,99.4 304.8,92.8 304.8,98.0 304.9,109.7 305.0,95.5 305.0,105.6 305.1,97.4 305.1,93.9 305.2,97.0 305.2,97.6 305.3,94.8 305.3,97.4 305.4,101.5 305.5,102.9 305.5,102.3 305.6,92.0 305.6,97.9 305.7,104.2 305.7,96.0 305.8,92.5 305.9,97.5 305.9,96.5 306.0,99.9 306.0,97.6 306.1,99.6 306.1,100.9 306.2,102.7 306.2,98.6 306.3,95.6 306.4,101.8 306.4,99.2 306.5,111.3 306.5,90.7 306.6,99.3 306.6,107.4 306.7,92.7 306.7,96.9 306.8,100.5 306.9,102.4 306.9,93.2 307.0,102.6 307.0,97.9 307.1,100.0 307.1,96.2 307.2,99.1 307.2,104.9 307.3,99.3 307.4,96.8 307.4,104.6 307.5,106.5 307.5,93.4 307.6,100.7 307.6,97.6 307.7,97.9 307.8,96.4 307.8,95.5 307.9,100.8 307.9,99.5 308.0,108.0 308.0,119.1 308.1,108.4 308.1,112.6 308.2,105.3 308.3,100.3 308.3,109.6 308.4,100.3 308.4,107.7 308.5,116.4 308.5,96.1 308.6,106.7 308.6,105.3 308.7,95.3 308.8,105.0 308.8,98.8 308.9,100.4 308.9,101.3 309.0,103.6 309.0,99.9 309.1,104.1 309.1,109.2 309.2,103.2 309.3,94.7 309.3,98.6 309.4,105.3 309.4,101.8 309.5,100.3 309.5,106.1 309.6,113.7 309.7,96.2 309.7,101.6 309.8,104.3 309.8,100.1 309.9,102.1 309.9,108.3 310.0,126.5 310.0,102.5 310.1,100.2 310.2,100.0 310.2,105.2 310.3,96.4 310.3,95.0 310.4,97.1 310.4,108.7 310.5,103.4 310.5,109.5 310.6,106.4 310.7,101.5 310.7,106.5 310.8,97.0 310.8,104.9 310.9,99.5 310.9,105.0 311.0,105.7 311.1,98.7 311.1,107.2 311.2,102.1 311.2,106.8 311.3,103.9 311.3,103.8 311.4,102.4 311.4,102.3 311.5,108.5 311.6,103.1 311.6,99.7 311.7,101.6 311.7,103.4 311.8,102.5 311.8,112.3 311.9,104.0 311.9,105.1 312.0,99.7 312.1,126.5 312.1,102.2 312.2,105.2 312.2,113.8 312.3,100.1 312.3,104.6 312.4,100.2 312.4,103.3 312.5,99.7 312.6,105.7 312.6,105.6 312.7,103.0 312.7,102.5 312.8,102.0 312.8,107.2 312.9,103.5 313.0,98.0 313.0,105.6 313.1,105.0 313.1,105.1 313.2,109.9 313.2,106.3 313.3,110.9 313.3,108.1 313.4,101.9 313.5,108.0 313.5,101.6 313.6,119.3 313.6,120.4 313.7,118.0 313.7,108.9 313.8,111.1 313.8,106.0 313.9,119.6 314.0,104.8 314.0,100.8 314.1,110.3 314.1,106.5 314.2,106.4 314.2,111.5 314.3,102.5 314.4,112.4 314.4,115.4 314.5,108.8 314.5,105.4 314.6,116.7 314.6,109.6 314.7,106.1 314.7,121.3 314.8,106.3 314.9,109.5 314.9,108.8 315.0,102.8 315.0,107.6 315.1,124.2 315.1,105.2 315.2,106.6 315.2,115.0 315.3,112.9 315.4,105.3 315.4,125.7 315.5,107.7 315.5,114.5 315.6,107.9 315.6,108.1 315.7,119.1 315.7,111.4 315.8,111.3 315.9,112.5 315.9,110.1 316.0,106.8 316.0,108.5 316.1,105.7 316.1,137.9 316.2,110.9 316.3,117.8 316.3,115.7 316.4,114.9 316.4,132.3 316.5,113.9 316.5,112.3 316.6,108.1 316.6,112.7 316.7,118.3 316.8,109.8 316.8,110.3 316.9,118.0 316.9,114.9 317.0,110.7 317.0,109.1 317.1,124.1 317.1,124.1 317.2,106.4 317.3,111.3 317.3,113.1 317.4,117.3 317.4,121.9 317.5,104.7 317.5,123.6 317.6,110.2 317.6,115.3 317.7,116.3 317.8,118.4 317.8,114.2 317.9,109.5 317.9,115.5 318.0,114.7 318.0,117.9 318.1,119.1 318.2,112.0 318.2,107.4 318.3,137.5 318.3,114.1 318.4,122.8 318.4,113.1 318.5,119.6 318.5,128.8 318.6,114.9 318.7,119.1 318.7,110.7 318.8,121.2 318.8,108.4 318.9,111.9 318.9,125.3 319.0,116.5 319.0,115.3 319.1,120.4 319.2,118.0 319.2,115.2 319.3,108.7 319.3,115.3 319.4,109.7 319.4,117.4 319.5,124.7 319.6,117.2 319.6,115.1 319.7,107.3 319.7,114.3 319.8,113.7 319.8,114.5 319.9,121.3 319.9,118.8 320.0,121.9 320.1,115.3 320.1,110.2 320.2,115.1 320.2,120.7 320.3,111.5 320.3,113.7 320.4,109.2 320.4,116.8 320.5,115.0 320.6,120.3 320.6,116.6 320.7,126.4 320.7,123.5 320.8,128.5 320.8,143.7 320.9,130.5 320.9,116.6 321.0,120.8 321.1,118.7 321.1,122.9 321.2,117.1 321.2,114.1 321.3,118.8 321.3,127.2 321.4,116.4 321.5,117.0 321.5,124.7 321.6,113.9 321.6,113.7 321.7,125.3 321.7,111.9 321.8,124.0 321.8,117.9 321.9,116.7 322.0,114.2 322.0,127.1 322.1,120.8 322.1,116.5 322.2,117.1 322.2,120.1 322.3,121.5 322.3,123.2 322.4,127.2 322.5,132.8 322.5,116.8 322.6,118.6 322.6,117.7 322.7,115.4 322.7,126.4 322.8,125.3 322.8,119.0 322.9,121.4 323.0,117.9 323.0,129.3 323.1,123.3 323.1,126.1 323.2,129.8 323.2,118.7 323.3,129.1 323.4,119.9 323.4,116.3 323.5,114.4 323.5,122.4 323.6,119.1 323.6,118.4 323.7,130.3 323.7,125.0 323.8,126.0 323.9,114.8 323.9,123.8 324.0,135.0 324.0,120.4 324.1,116.2 324.1,110.9 324.2,114.0 324.2,115.8 324.3,118.1 324.4,119.2 324.4,120.8 324.5,126.8 324.5,127.4 324.6,131.4 324.6,118.8 324.7,115.7 324.8,125.8 324.8,124.2 324.9,119.8 324.9,133.4 325.0,125.6 325.0,122.2 325.1,116.3 325.1,139.2 325.2,127.5 325.3,130.0 325.3,118.6 325.4,120.0 325.4,118.4 325.5,119.8 325.5,119.3 325.6,118.3 325.6,131.2 325.7,125.6 325.8,116.2 325.8,132.0 325.9,121.5 325.9,131.2 326.0,129.5 326.0,125.7 326.1,120.0 326.1,119.5 326.2,126.1 326.3,118.0 326.3,119.9 326.4,117.3 326.4,119.9 326.5,124.8 326.5,117.5 326.6,124.5 326.7,119.8 326.7,122.8 326.8,119.2 326.8,124.1 326.9,133.8 326.9,117.5 327.0,121.8 327.0,123.7 327.1,140.0 327.2,116.5 327.2,121.4 327.3,118.0 327.3,128.9 327.4,118.7 327.4,120.7 327.5,117.2 327.5,133.0 327.6,121.8 327.7,118.3 327.7,124.1 327.8,120.9 327.8,130.6 327.9,155.2 327.9,128.4 328.0,132.5 328.0,125.7 328.1,120.6 328.2,119.8 328.2,128.1 328.3,124.5 328.3,135.0 328.4,120.1 328.4,118.2 328.5,125.6 328.6,120.2 328.6,141.8 328.7,118.2 328.7,129.4 328.8,123.3 328.8,121.1 328.9,132.3 328.9,123.4 329.0,128.7 329.1,138.1 329.1,123.7 329.2,123.0 329.2,127.5 329.3,127.5 329.3,129.4 329.4,137.7 329.4,124.1 329.5,127.8 329.6,148.7 329.6,127.8 329.7,136.6 329.7,125.3 329.8,128.6 329.8,125.4 329.9,128.9 330.0,129.7 330.0,144.2 330.1,128.6 330.1,125.1 330.2,141.2 330.2,125.2 330.3,123.1 330.3,126.9 330.4,127.7 330.5,127.4 330.5,124.7 330.6,124.5 330.6,125.1 330.7,123.0 330.7,131.0 330.8,128.1 330.8,126.8 330.9,121.8 331.0,130.9 331.0,123.0 331.1,140.5 331.1,132.8 331.2,121.6 331.2,121.5 331.3,136.9 331.3,126.1 331.4,125.0 331.5,135.8 331.5,133.9 331.6,125.2 331.6,137.7 331.7,126.6 331.7,145.5 331.8,128.0 331.9,130.7 331.9,140.2 332.0,120.5 332.0,128.4 332.1,127.3 332.1,131.0 332.2,125.0 332.2,125.0 332.3,126.5 332.4,125.4 332.4,132.5 332.5,150.0 332.5,124.9 332.6,124.0 332.6,124.9 332.7,126.5 332.7,136.1 332.8,127.1 332.9,131.5 332.9,141.6 333.0,143.4 333.0,127.2 333.1,128.3 333.1,131.8 333.2,127.1 333.2,124.9 333.3,125.7 333.4,133.9 333.4,124.7 333.5,127.8 333.5,127.1 333.6,139.5 333.6,132.3 333.7,133.8 333.8,130.6 333.8,126.1 333.9,128.2 333.9,122.3 334.0,121.5 334.0,128.2 334.1,130.3 334.1,128.0 334.2,122.7 334.3,133.8 334.3,135.2 334.4,131.7 334.4,123.6 334.5,127.3 334.5,126.4 334.6,138.2 334.6,128.7 334.7,140.6 334.8,125.5 334.8,142.8 334.9,125.3 334.9,142.3 335.0,153.5 335.0,128.9 335.1,142.6 335.2,128.0 335.2,148.4 335.3,126.6 335.3,131.5 335.4,129.6 335.4,158.3 335.5,142.9 335.5,139.2 335.6,134.2 335.7,132.8 335.7,123.6 335.8,129.4 335.8,128.2 335.9,132.2 335.9,135.9 336.0,126.0 336.0,126.7 336.1,132.7 336.2,131.2 336.2,125.7 336.3,136.5 336.3,139.7 336.4,126.4 336.4,137.6 336.5,141.2 336.5,137.6 336.6,138.8 336.7,128.6 336.7,134.4 336.8,133.4 336.8,136.4 336.9,123.9 336.9,133.5 337.0,125.6 337.1,132.0 337.1,130.3 337.2,141.5 337.2,144.2 337.3,135.4 337.3,127.4 337.4,134.5 337.4,129.8 337.5,141.4 337.6,145.5 337.6,136.8 337.7,130.5 337.7,137.7 337.8,132.0 337.8,141.7 337.9,128.5 337.9,130.8 338.0,129.3 338.1,140.8 338.1,132.6 338.2,129.9 338.2,138.1 338.3,136.9 338.3,129.5 338.4,141.7 338.4,138.6 338.5,131.4 338.6,134.3 338.6,132.5 338.7,136.8 338.7,134.6 338.8,138.4 338.8,139.8 338.9,133.4 339.0,138.0 339.0,141.8 339.1,135.5 339.1,137.4 339.2,139.8 339.2,144.7 339.3,132.7 339.3,128.4 339.4,128.3 339.5,144.2 339.5,133.9 339.6,129.3 339.6,132.9 339.7,134.3 339.7,139.0 339.8,139.7 339.8,135.2 339.9,137.5 340.0,130.6 340.0,140.1 340.1,135.1 340.1,135.0 340.2,133.2 340.2,135.0 340.3,135.4 340.4,131.3 340.4,134.7 340.5,137.9 340.5,132.3 340.6,130.5 340.6,139.2 340.7,137.5 340.7,138.2 340.8,128.3 340.9,134.4 340.9,133.2 341.0,136.7 341.0,138.7 341.1,134.1 341.1,136.4 341.2,136.0 341.2,134.1 341.3,133.9 341.4,136.4 341.4,132.2 341.5,135.7 341.5,145.4 341.6,134.3 341.6,131.0 341.7,139.8 341.7,132.8 341.8,140.8 341.9,138.5 341.9,144.2 342.0,167.9 342.0,143.0 342.1,135.0 342.1,131.6 342.2,137.0 342.3,134.6 342.3,139.1 342.4,139.6 342.4,136.8 342.5,142.6 342.5,133.1 342.6,158.3 342.6,138.3 342.7,137.4 342.8,137.9 342.8,141.3 342.9,139.2 342.9,134.5 343.0,138.3 343.0,134.4 343.1,131.5 343.1,131.7 343.2,137.9 343.3,145.5 343.3,136.1 343.4,141.5 343.4,138.5 343.5,138.7 343.5,146.9 343.6,134.2 343.6,155.4 343.7,140.6 343.8,140.8 343.8,157.5 343.9,144.3 343.9,134.9 344.0,137.1 344.0,159.4 344.1,140.8 344.2,138.3 344.2,144.7 344.3,143.0 344.3,148.3 344.4,145.8 344.4,136.5 344.5,140.5 344.5,140.9 344.6,145.1 344.7,140.0 344.7,147.0 344.8,141.8 344.8,136.8 344.9,146.6 344.9,140.2 345.0,159.3 345.0,137.6 345.1,142.9 345.2,138.0 345.2,148.0 345.3,150.8 345.3,133.6 345.4,136.4 345.4,143.3 345.5,140.0 345.6,146.1 345.6,141.1 345.7,137.4 345.7,139.6 345.8,140.4 345.8,134.6 345.9,142.9 345.9,146.7 346.0,152.5 346.1,139.5 346.1,143.3 346.2,137.1 346.2,149.2 346.3,135.1 346.3,143.2 346.4,137.3 346.4,148.8 346.5,144.8 346.6,147.3 346.6,141.1 346.7,138.6 346.7,145.3 346.8,141.6 346.8,147.8 346.9,137.0 346.9,144.2 347.0,141.8 347.1,146.4 347.1,142.3 347.2,139.7 347.2,143.4 347.3,137.9 347.3,143.6 347.4,144.9 347.5,140.8 347.5,136.2 347.6,139.0 347.6,136.9 347.7,143.9 347.7,141.3 347.8,143.4 347.8,133.8 347.9,135.5 348.0,144.1 348.0,140.8 348.1,141.7 348.1,144.9 348.2,149.7 348.2,139.7 348.3,159.7 348.3,136.5 348.4,150.0 348.5,140.6 348.5,156.4 348.6,139.1 348.6,137.1 348.7,146.8 348.7,138.8 348.8,145.6 348.8,146.7 348.9,138.0 349.0,150.5 349.0,137.5 349.1,144.9 349.1,139.0 349.2,142.5 349.2,150.1 349.3,147.5 349.4,149.0 349.4,141.3 349.5,138.1 349.5,149.7 349.6,155.7 349.6,146.9 349.7,159.6 349.7,141.8 349.8,149.8 349.9,139.9 349.9,146.7 350.0,141.2 350.0,143.2 350.1,139.6 350.1,136.3 350.2,139.4 350.2,141.8 350.3,147.2 350.4,139.4 350.4,145.7 350.5,142.3 350.5,145.9 350.6,136.4 350.6,144.1 350.7,140.6 350.8,156.8 350.8,153.0 350.9,138.0 350.9,145.7 351.0,152.0 351.0,163.6 351.1,150.0 351.1,155.7 351.2,156.4 351.3,145.4 351.3,145.5 351.4,158.0 351.4,147.6 351.5,155.9 351.5,147.0 351.6,141.0 351.6,141.6 351.7,149.3 351.8,143.5 351.8,142.9 351.9,150.3 351.9,154.9 352.0,136.4 352.0,142.7 352.1,137.0 352.1,149.1 352.2,138.9 352.3,139.2 352.3,150.1 352.4,144.5 352.4,140.8 352.5,142.2 352.5,142.9 352.6,149.0 352.7,144.6 352.7,148.3 352.8,150.0 352.8,159.1 352.9,152.2 352.9,156.3 353.0,153.5 353.0,143.2 353.1,146.9 353.2,144.5 353.2,152.9 353.3,137.4 353.3,156.2 353.4,140.0 353.4,145.5 353.5,148.8 353.5,144.3 353.6,148.9 353.7,148.5 353.7,145.9 353.8,149.2 353.8,150.5 353.9,149.6 353.9,147.8 354.0,152.7 354.0,149.9 354.1,142.0 354.2,149.4 354.2,147.6 354.3,147.4 354.3,146.0 354.4,146.4 354.4,152.6 354.5,147.7 354.6,144.1 354.6,141.7 354.7,154.4 354.7,163.0 354.8,144.7 354.8,148.9 354.9,155.8 354.9,138.1 355.0,150.7 355.1,145.9 355.1,141.9 355.2,140.7 355.2,157.0 355.3,151.8 355.3,150.4 355.4,153.0 355.4,141.3 355.5,146.4 355.6,152.5 355.6,150.4 355.7,145.8 355.7,144.3 355.8,169.4 355.8,141.5 355.9,152.9 356.0,150.6 356.0,153.8 356.1,145.2 356.1,145.6 356.2,148.0 356.2,150.2 356.3,143.0 356.3,138.7 356.4,147.2 356.5,149.6 356.5,148.7 356.6,151.1 356.6,149.4 356.7,154.1 356.7,148.0 356.8,143.7 356.8,144.1 356.9,153.3 357.0,144.3 357.0,167.5 357.1,147.1 357.1,161.6 357.2,158.0 357.2,150.8 357.3,144.6 357.3,148.9 357.4,152.7 357.5,146.8 357.5,153.3 357.6,153.4 357.6,152.9 357.7,149.4 357.7,143.8 357.8,151.3 357.9,150.6 357.9,165.8 358.0,144.6 358.0,158.2 358.1,148.5 358.1,144.4 358.2,154.0 358.2,144.7 358.3,148.4 358.4,169.2 358.4,154.5 358.5,145.9 358.5,157.9 358.6,157.7 358.6,153.7 358.7,140.9 358.7,151.4 358.8,151.5 358.9,146.5 358.9,148.5 359.0,148.1 359.0,154.9 359.1,146.5 359.1,144.3 359.2,149.8 359.2,148.7 359.3,147.2 359.4,149.6 359.4,171.5 359.5,156.2 359.5,144.0 359.6,146.8 359.6,144.8 359.7,144.9 359.8,148.4 359.8,144.5 359.9,153.4 359.9,149.7 360.0,149.9 360.0,147.9 360.1,147.1 360.1,158.8 360.2,148.1 360.3,143.5 360.3,145.8 360.4,151.1 360.4,145.3 360.5,152.6 360.5,149.4 360.6,153.5 360.6,144.1 360.7,150.9 360.8,149.8 360.8,151.2 360.9,149.9 360.9,145.9 361.0,147.6 361.0,147.1 361.1,145.2 361.2,147.5 361.2,146.4 361.3,151.3 361.3,156.3 361.4,156.0 361.4,145.2 361.5,154.3 361.5,149.9 361.6,156.3 361.7,146.0 361.7,144.7 361.8,147.1 361.8,160.7 361.9,151.6 361.9,152.0 362.0,150.3 362.0,155.8 362.1,152.9 362.2,148.4 362.2,144.1 362.3,148.7 362.3,146.2 362.4,153.0 362.4,150.6 362.5,145.5 362.5,169.9 362.6,156.7 362.7,177.8 362.7,160.9 362.8,160.8 362.8,155.9 362.9,154.0 362.9,151.8 363.0,151.6 363.1,149.8 363.1,145.5 363.2,152.4 363.2,148.1 363.3,169.0 363.3,145.3 363.4,150.7 363.4,147.0 363.5,158.2 363.6,144.8 363.6,155.1 363.7,160.3 363.7,152.8 363.8,152.3 363.8,157.7 363.9,148.8 363.9,155.5 364.0,154.1 364.1,162.8 364.1,157.2 364.2,146.1 364.2,152.7 364.3,152.3 364.3,149.7 364.4,155.5 364.4,177.9 364.5,160.2 364.6,159.7 364.6,152.8 364.7,157.3 364.7,153.7 364.8,168.5 364.8,157.7 364.9,162.7 365.0,151.5 365.0,151.7 365.1,149.4 365.1,164.4 365.2,150.1 365.2,150.0 365.3,146.1 365.3,159.0 365.4,153.8 365.5,159.4 365.5,151.0 365.6,153.5 365.6,156.1 365.7,149.7 365.7,161.4 365.8,160.3 365.8,156.9 365.9,151.0 366.0,158.0 366.0,157.5 366.1,158.8 366.1,162.8 366.2,152.5 366.2,170.5 366.3,161.2 366.4,157.2 366.4,152.3 366.5,155.4 366.5,158.2 366.6,156.5 366.6,147.6 366.7,151.8 366.7,148.5 366.8,162.3 366.9,155.8 366.9,156.1 367.0,154.0 367.0,153.4 367.1,150.6 367.1,152.5 367.2,148.6 367.2,162.3 367.3,150.2 367.4,148.9 367.4,159.8 367.5,160.7 367.5,154.1 367.6,168.4 367.6,150.6 367.7,160.9 367.7,154.5 367.8,158.8 367.9,150.8 367.9,150.1 368.0,154.0 368.0,159.0 368.1,155.7 368.1,153.6 368.2,147.9 368.3,154.1 368.3,151.3 368.4,153.6 368.4,150.6 368.5,173.8 368.5,157.2 368.6,152.6 368.6,164.4 368.7,164.1 368.8,149.9 368.8,150.8 368.9,158.7 368.9,160.4 369.0,152.7 369.0,155.3 369.1,156.9 369.1,150.4 369.2,156.4 369.3,149.9 369.3,148.5 369.4,155.0 369.4,160.6 369.5,153.3 369.5,172.1 369.6,168.4 369.7,161.1 369.7,151.4 369.8,149.9 369.8,158.9 369.9,160.8 369.9,153.0 370.0,156.7 370.0,154.7 370.1,155.4 370.2,156.0 370.2,157.6 370.3,166.1 370.3,165.9 370.4,157.5 370.4,158.2 370.5,155.2 370.5,155.0 370.6,157.8 370.7,155.8 370.7,162.1 370.8,162.7 370.8,164.0 370.9,160.1 370.9,157.7 371.0,156.9 371.0,159.9 371.1,153.4 371.2,152.8 371.2,154.8 371.3,156.5 371.3,155.5 371.4,161.5 371.4,155.8 371.5,161.4 371.6,165.2 371.6,160.5 371.7,165.4 371.7,150.7 371.8,149.2 371.8,157.0 371.9,164.4 371.9,166.4 372.0,160.8 372.1,151.5 372.1,154.9 372.2,154.9 372.2,161.4 372.3,155.7 372.3,172.0 372.4,153.0 372.4,164.0 372.5,160.0 372.6,154.3 372.6,158.0 372.7,165.2 372.7,179.6 372.8,155.0 372.8,174.9 372.9,152.9 372.9,156.8 373.0,166.5 373.1,156.8 373.1,162.4 373.2,164.5 373.2,155.0 373.3,167.9 373.3,161.5 373.4,159.0 373.5,160.7 373.5,165.9 373.6,156.0 373.6,172.9 373.7,152.5 373.7,158.4 373.8,155.1 373.8,161.2 373.9,162.1 374.0,162.3 374.0,156.5 374.1,162.2 374.1,160.7 374.2,162.0 374.2,181.4 374.3,161.8 374.3,161.3 374.4,158.9 374.5,159.2 374.5,159.4 374.6,164.5 374.6,173.4 374.7,160.0 374.7,163.5 374.8,160.7 374.9,164.6 374.9,159.9 375.0,154.4 375.0,158.0 375.1,159.3 375.1,159.1 375.2,160.5 375.2,165.9 375.3,158.0 375.4,158.7 375.4,173.6 375.5,169.5 375.5,172.7 375.6,184.5 375.6,157.2 375.7,161.1 375.7,152.6 375.8,155.9 375.9,160.6 375.9,158.7 376.0,161.5 376.0,159.8 376.1,157.8 376.1,157.0 376.2,156.3 376.2,156.0 376.3,159.9 376.4,166.6 376.4,159.8 376.5,158.9 376.5,157.5 376.6,164.3 376.6,157.9 376.7,164.9 376.8,161.2 376.8,159.0 376.9,163.0 376.9,164.2 377.0,160.8 377.0,155.9 377.1,155.5 377.1,165.9 377.2,164.3 377.3,159.1 377.3,158.4 377.4,160.8 377.4,162.7 377.5,171.2 377.5,158.1 377.6,158.8 377.6,160.8 377.7,167.3 377.8,156.2 377.8,161.3 377.9,171.0 377.9,159.4 378.0,163.3 378.0,156.8 378.1,158.7 378.1,163.1 378.2,160.3 378.3,165.5 378.3,159.6 378.4,157.3 378.4,170.4 378.5,160.6 378.5,158.2 378.6,164.5 378.7,168.9 378.7,160.9 378.8,168.4 378.8,160.8 378.9,169.2 378.9,164.3 379.0,161.7 379.0,160.2 379.1,156.4 379.2,158.3 379.2,164.3 379.3,161.9 379.3,165.3 379.4,157.5 379.4,170.3 379.5,156.3 379.5,163.3 379.6,160.8 379.7,159.9 379.7,160.3 379.8,167.1 379.8,160.2 379.9,167.1 379.9,157.6 380.0,166.8 380.1,171.6 380.1,167.9 380.2,165.1 380.2,161.4 380.3,157.9 380.3,158.4 380.4,159.7 380.4,161.1 380.5,160.4 380.6,160.5 380.6,161.2 380.7,169.0 380.7,176.2 380.8,158.5 380.8,161.1 380.9,161.5 380.9,165.0 381.0,164.7 381.1,160.1 381.1,164.2 381.2,165.1 381.2,173.0 381.3,170.3 381.3,166.7 381.4,160.0 381.4,165.8 381.5,172.2 381.6,173.7 381.6,166.4 381.7,163.3 381.7,178.2 381.8,158.1 381.8,169.8 381.9,169.5 382.0,167.4 382.0,170.0 382.1,160.9 382.1,167.7 382.2,169.4 382.2,158.3 382.3,159.0 382.3,167.6 382.4,160.5 382.5,162.9 382.5,166.9 382.6,169.3 382.6,157.2 382.7,171.5 382.7,158.9 382.8,158.9 382.8,162.9 382.9,164.7 383.0,171.6 383.0,171.6 383.1,168.0 383.1,161.7 383.2,166.0 383.2,175.0 383.3,158.2 383.3,179.4 383.4,163.8 383.5,166.1 383.5,165.0 383.6,161.4 383.6,161.5 383.7,170.9 383.7,172.4 383.8,166.4 383.9,160.2 383.9,185.1 384.0,167.3 384.0,169.5 384.1,158.6 384.1,171.2 384.2,167.1 384.2,167.3 384.3,167.5 384.4,177.1 384.4,186.0 384.5,165.3 384.5,167.2 384.6,160.9 384.6,168.1 384.7,162.6 384.7,163.6 384.8,167.2 384.9,161.9 384.9,171.3 385.0,169.9 385.0,163.7 385.1,165.1 385.1,175.8 385.2,164.9 385.3,160.6 385.3,166.7 385.4,170.9 385.4,167.0 385.5,166.3 385.5,175.5 385.6,165.4 385.6,161.2 385.7,179.1 385.8,169.8 385.8,167.9 385.9,170.6 385.9,166.9 386.0,173.1 386.0,162.9 386.1,163.8 386.1,165.6 386.2,164.1 386.3,164.2 386.3,170.3 386.4,168.2 386.4,165.3 386.5,165.7 386.5,170.8 386.6,167.9 386.6,174.5 386.7,160.3 386.8,174.0 386.8,176.8 386.9,171.4 386.9,175.0 387.0,160.8 387.0,164.7 387.1,168.1 387.2,177.3 387.2,160.8 387.3,161.7 387.3,166.2 387.4,165.2 387.4,168.9 387.5,162.3 387.5,164.9 387.6,167.1 387.7,162.4 387.7,174.2 387.8,164.0 387.8,164.7 387.9,170.2 387.9,168.6 388.0,176.0 388.0,167.7 388.1,167.2 388.2,168.3 388.2,159.0 388.3,176.4 388.3,174.1 388.4,169.1 388.4,177.3 388.5,169.9 388.5,165.0 388.6,165.8 388.7,179.3 388.7,169.7 388.8,172.1 388.8,163.2 388.9,165.7 388.9,170.0 389.0,165.2 389.1,169.0 389.1,166.8 389.2,183.5 389.2,172.4 389.3,165.1 389.3,176.3 389.4,172.7 389.4,168.5 389.5,178.8 389.6,168.4 389.6,168.3 389.7,163.5 389.7,175.5 389.8,168.6 389.8,162.8 389.9,165.8 389.9,172.2 390.0,167.3 390.1,172.4 390.1,170.2 390.2,179.8 390.2,165.9 390.3,167.8 390.3,168.8 390.4,176.5 390.5,163.5 390.5,171.3 390.6,166.7 390.6,166.3 390.7,181.7 390.7,174.8 390.8,173.6 390.8,166.3 390.9,174.1 391.0,173.8 391.0,162.3 391.1,169.6 391.1,166.2 391.2,165.2 391.2,164.1 391.3,179.2 391.3,175.1 391.4,171.4 391.5,163.4 391.5,174.1 391.6,177.8 391.6,170.2 391.7,178.1 391.7,167.8 391.8,172.5 391.8,170.9 391.9,174.4 392.0,166.9 392.0,184.0 392.1,169.3 392.1,165.9 392.2,175.9 392.2,171.4 392.3,168.1 392.4,175.9 392.4,174.9 392.5,162.9 392.5,183.8 392.6,173.4 392.6,172.0 392.7,180.3 392.7,180.1 392.8,174.2 392.9,167.4 392.9,176.9 393.0,163.0 393.0,178.6 393.1,173.6 393.1,167.3 393.2,168.3 393.2,169.8 393.3,171.6 393.4,170.7 393.4,165.2 393.5,164.9 393.5,175.4 393.6,168.7 393.6,171.9 393.7,172.5 393.7,165.6 393.8,168.5 393.9,177.4 393.9,174.3 394.0,163.1 394.0,167.6 394.1,167.4 394.1,188.3 394.2,172.4 394.3,181.0 394.3,165.3 394.4,198.7 394.4,166.9 394.5,178.5 394.5,185.3 394.6,168.8 394.6,169.0 394.7,171.6 394.8,170.0 394.8,173.8 394.9,170.6 394.9,166.8 395.0,185.1 395.0,176.7 395.1,170.5 395.1,172.5 395.2,169.8 395.3,170.3 395.3,169.5 395.4,174.8 395.4,168.7 395.5,172.6 395.5,179.1 395.6,171.1 395.7,167.3 395.7,175.5 395.8,170.3 395.8,165.6 395.9,175.3 395.9,170.1 396.0,175.1 396.0,166.9 396.1,169.6 396.2,174.9 396.2,171.3 396.3,177.9 396.3,174.4 396.4,171.4 396.4,178.8 396.5,176.3 396.5,169.4 396.6,173.4 396.7,174.8 396.7,174.1 396.8,169.7 396.8,180.8 396.9,167.4 396.9,170.3 397.0,173.3 397.0,170.7 397.1,176.1 397.2,183.7 397.2,170.2 397.3,174.3 397.3,174.7 397.4,167.3 397.4,178.4 397.5,171.7 397.6,169.8 397.6,167.2 397.7,169.8 397.7,177.7 397.8,173.0 397.8,174.8 397.9,180.1 397.9,179.5 398.0,180.3 398.1,172.7 398.1,174.2 398.2,171.4 398.2,177.2 398.3,188.4 398.3,168.7 398.4,178.1 398.4,173.1 398.5,177.2 398.6,198.2 398.6,178.0 398.7,179.1 398.7,179.2 398.8,176.4 398.8,167.8 398.9,169.4 398.9,175.5 399.0,190.6 399.1,175.8 399.1,177.6 399.2,177.0 399.2,173.3 399.3,182.7 399.3,166.2 399.4,166.3 399.5,166.0 399.5,168.0 399.6,183.8 399.6,170.5 399.7,170.6 399.7,174.6 399.8,170.8 399.8,173.9 399.9,189.3 400.0,181.1 400.0,176.4 400.1,171.5 400.1,179.9 400.2,173.6 400.2,192.6 400.3,173.0 400.3,177.7 400.4,170.4 400.5,174.1 400.5,179.8 400.6,183.9 400.6,173.6 400.7,172.6 400.7,181.0 400.8,174.4 400.9,194.2 400.9,179.0 401.0,175.8 401.0,174.5 401.1,177.6 401.1,174.2 401.2,174.4 401.2,178.0 401.3,178.0 401.4,177.8 401.4,183.7 401.5,171.4 401.5,172.3 401.6,180.1 401.6,176.7 401.7,174.3 401.7,169.9 401.8,172.6 401.9,182.6 401.9,176.7 402.0,175.4 402.0,177.7 402.1,176.3 402.1,198.8 402.2,176.4 402.2,180.6 402.3,174.9 402.4,173.3 402.4,171.3 402.5,180.0 402.5,176.2 402.6,171.0 402.6,171.9 402.7,175.0 402.8,173.9 402.8,167.0 402.9,175.6 402.9,177.7 403.0,191.3 403.0,173.1 403.1,172.4 403.1,173.6 403.2,176.6 403.3,174.0 403.3,181.7 403.4,175.3 403.4,182.3 403.5,182.6 403.5,173.4 403.6,169.7 403.6,177.4 403.7,173.8 403.8,179.0 403.8,183.3 403.9,171.0 403.9,179.3 404.0,179.5 404.0,177.6 404.1,176.7 404.1,176.2 404.2,182.3 404.3,178.2 404.3,178.0 404.4,170.6 404.4,179.4 404.5,173.7 404.5,189.7 404.6,178.3 404.7,173.3 404.7,176.6 404.8,173.9 404.8,180.6 404.9,184.3 404.9,177.5 405.0,176.5 405.0,177.9 405.1,177.2 405.2,176.6 405.2,175.8 405.3,180.3 405.3,173.7 405.4,185.1 405.4,170.0 405.5,185.8 405.5,177.5 405.6,179.4 405.7,181.5 405.7,182.6 405.8,193.8 405.8,174.8 405.9,177.3 405.9,174.3 406.0,178.5 406.1,178.1 406.1,187.0 406.2,171.9 406.2,179.6 406.3,176.3 406.3,177.3 406.4,177.7 406.4,174.5 406.5,178.1 406.6,182.5 406.6,176.6 406.7,176.4 406.7,177.1 406.8,178.7 406.8,180.8 406.9,180.2 406.9,186.4 407.0,188.8 407.1,175.7 407.1,177.5 407.2,174.2 407.2,188.0 407.3,173.2 407.3,172.5 407.4,178.1 407.4,174.0 407.5,184.3 407.6,176.1 407.6,186.5 407.7,175.6 407.7,179.5 407.8,177.3 407.8,185.5 407.9,173.2 408.0,182.2 408.0,188.8 408.1,178.3 408.1,179.1 408.2,192.0 408.2,177.1 408.3,178.5 408.3,182.7 408.4,183.2 408.5,177.5 408.5,189.2 408.6,177.8 408.6,197.4 408.7,179.9 408.7,186.9 408.8,179.3 408.8,179.7 408.9,175.3 409.0,183.8 409.0,179.0 409.1,187.5 409.1,184.4 409.2,182.7 409.2,175.4 409.3,180.4 409.3,177.4 409.4,174.7 409.5,174.8 409.5,184.7 409.6,188.7 409.6,180.2 409.7,179.7 409.7,186.4 409.8,177.8 409.9,179.1 409.9,182.5 410.0,176.8 410.0,178.9 410.1,180.4 410.1,176.9 410.2,175.0 410.2,182.8 410.3,185.1 410.4,179.9 410.4,173.9 410.5,185.1 410.5,179.9 410.6,182.8 410.6,181.6 410.7,185.0 410.7,179.2 410.8,177.5 410.9,178.3 410.9,191.2 411.0,191.8 411.0,175.8 411.1,180.5 411.1,181.0 411.2,182.6 411.3,178.1 411.3,188.1 411.4,174.5 411.4,180.5 411.5,174.8 411.5,185.6 411.6,192.9 411.6,179.8 411.7,184.0 411.8,178.4 411.8,179.5 411.9,186.6 411.9,178.3 412.0,188.7 412.0,175.4 412.1,182.1 412.1,180.9 412.2,174.7 412.3,195.0 412.3,180.0 412.4,189.1 412.4,181.6 412.5,173.6 412.5,180.4 412.6,182.0 412.6,178.4 412.7,180.2 412.8,184.7 412.8,187.5 412.9,173.9 412.9,179.3 413.0,181.3 413.0,182.5 413.1,178.5 413.2,178.6 413.2,198.4 413.3,181.3 413.3,178.8 413.4,186.3 413.4,185.2 413.5,178.9 413.5,179.3 413.6,181.9 413.7,180.5 413.7,184.5 413.8,180.2 413.8,185.1 413.9,184.7 413.9,179.0 414.0,176.5 414.0,187.8 414.1,174.6 414.2,179.5 414.2,184.5 414.3,182.5 414.3,178.5 414.4,185.8 414.4,175.7 414.5,181.7 414.5,188.5 414.6,178.4 414.7,181.6 414.7,191.4 414.8,180.9 414.8,182.9 414.9,196.4 414.9,189.8 415.0,180.7 415.1,183.3 415.1,180.7 415.2,181.4 415.2,181.9 415.3,182.4 415.3,184.7 415.4,181.7 415.4,195.2 415.5,189.8 415.6,183.5 415.6,178.6 415.7,182.2 415.7,188.5 415.8,182.8 415.8,176.7 415.9,185.0 415.9,180.0 416.0,184.6 416.1,183.5 416.1,180.8 416.2,181.9 416.2,191.7 416.3,191.3 416.3,177.2 416.4,178.1 416.5,190.2 416.5,191.1 416.6,184.2 416.6,187.7 416.7,178.9 416.7,189.6 416.8,180.1 416.8,179.1 416.9,185.4 417.0,186.7 417.0,189.1 417.1,183.1 417.1,184.4 417.2,192.1 417.2,193.7 417.3,183.9 417.3,181.1 417.4,186.2 417.5,197.1 417.5,180.0 417.6,186.5 417.6,183.2 417.7,189.2 417.7,178.9 417.8,197.9 417.8,189.8 417.9,186.3 418.0,191.8 418.0,190.0 418.1,198.8 418.1,186.8 418.2,181.7 418.2,190.4 418.3,189.8 418.4,183.2 418.4,184.6 418.5,185.8 418.5,194.6 418.6,190.0 418.6,185.6 418.7,190.8 418.7,186.4 418.8,182.8 418.9,183.0 418.9,190.0 419.0,181.9 419.0,184.0 419.1,186.6 419.1,183.7 419.2,182.1 419.2,178.0 419.3,186.4 419.4,188.0 419.4,181.2 419.5,193.6 419.5,189.3 419.6,194.0 419.6,192.7 419.7,187.9 419.7,183.5 419.8,199.6 419.9,188.9 419.9,189.7 420.0,187.3 420.0,181.9 420.1,183.8 420.1,189.1 420.2,192.6 420.3,185.4 420.3,195.3 420.4,191.0 420.4,192.9 420.5,207.4 420.5,188.8 420.6,187.1 420.6,187.2 420.7,179.9 420.8,186.7 420.8,185.4 420.9,187.8 420.9,189.0 421.0,182.0 421.0,193.0 421.1,191.2 421.1,185.5 421.2,187.2 421.3,185.9 421.3,188.0 421.4,183.8 421.4,192.6 421.5,188.4 421.5,185.0 421.6,193.1 421.7,184.0 421.7,180.8 421.8,192.0 421.8,183.6 421.9,185.0 421.9,179.9 422.0,185.5 422.0,185.2 422.1,184.1 422.2,187.3 422.2,184.0 422.3,181.8 422.3,189.5 422.4,195.0 422.4,195.7 422.5,186.1 422.5,191.8 422.6,217.6 422.7,189.4 422.7,190.1 422.8,188.6 422.8,189.5 422.9,186.8 422.9,192.4 423.0,191.3 423.0,189.2 423.1,188.7 423.2,191.0 423.2,186.9 423.3,186.8 423.3,191.4 423.4,197.0 423.4,202.5 423.5,196.4 423.6,190.5 423.6,180.7 423.7,196.8 423.7,196.5 423.8,189.6 423.8,194.3 423.9,196.3 423.9,187.0 424.0,190.9 424.1,197.2 424.1,186.2 424.2,189.6 424.2,186.4 424.3,186.9 424.3,201.5 424.4,191.8 424.4,189.9 424.5,183.3 424.6,191.5 424.6,206.4 424.7,193.7 424.7,195.1 424.8,187.2 424.8,195.8 424.9,189.3 425.0,190.1 425.0,185.1 425.1,192.7 425.1,196.9 425.2,186.0 425.2,191.9 425.3,181.1 425.3,195.5 425.4,182.9 425.5,193.3 425.5,189.9 425.6,186.7 425.6,198.5 425.7,197.7 425.7,196.6 425.8,189.5 425.8,184.1 425.9,192.7 426.0,205.9 426.0,211.6 426.1,203.9 426.1,191.2 426.2,184.9 426.2,196.0 426.3,187.8 426.3,188.5 426.4,195.8 426.5,200.3 426.5,192.6 426.6,187.5 426.6,187.0 426.7,190.5 426.7,194.6 426.8,186.4 426.9,194.0 426.9,192.7 427.0,192.6 427.0,197.6 427.1,193.5 427.1,191.6 427.2,194.7 427.2,198.5 427.3,200.8 427.4,196.4 427.4,189.9 427.5,200.6 427.5,192.7 427.6,192.0 427.6,189.2 427.7,198.5 427.7,189.6 427.8,206.5 427.9,190.8 427.9,189.5 428.0,197.0 428.0,199.8 428.1,204.3 428.1,190.4 428.2,203.1 428.2,191.6 428.3,189.4 428.4,196.1 428.4,206.7 428.5,195.7 428.5,188.7 428.6,188.2 428.6,196.8 428.7,190.2 428.8,188.1 428.8,191.1 428.9,192.0 428.9,189.3 429.0,189.5 429.0,192.5 429.1,192.7 429.1,196.9 429.2,202.0 429.3,195.4 429.3,204.3 429.4,189.5 429.4,192.2 429.5,188.6 429.5,195.5 429.6,200.3 429.6,189.8 429.7,188.5 429.8,188.8 429.8,188.9 429.9,188.2 429.9,191.2 430.0,192.4 430.0,190.2 430.1,200.1 430.2,191.5 430.2,190.8 430.3,193.2 430.3,193.6 430.4,191.9 430.4,190.1 430.5,189.5 430.5,194.4 430.6,191.9 430.7,207.0 430.7,197.9 430.8,199.2 430.8,196.4 430.9,191.4 430.9,189.3 431.0,197.9 431.0,195.9 431.1,191.8 431.2,205.0 431.2,198.8 431.3,195.1 431.3,199.7 431.4,192.6 431.4,187.3 431.5,200.3 431.5,212.4 431.6,203.7 431.7,197.7 431.7,191.8 431.8,209.6 431.8,200.1 431.9,196.0 431.9,189.1 432.0,190.3 432.1,202.1 432.1,201.7 432.2,195.8 432.2,191.3 432.3,193.6 432.3,188.4 432.4,188.8 432.4,196.8 432.5,192.9 432.6,191.6 432.6,191.8 432.7,191.5 432.7,188.6 432.8,201.3 432.8,195.4 432.9,202.6 432.9,198.8 433.0,193.0 433.1,198.7 433.1,192.9 433.2,204.9 433.2,192.7 433.3,208.9 433.3,193.1 433.4,196.2 433.4,197.6 433.5,206.0 433.6,191.4 433.6,196.6 433.7,200.9 433.7,198.7 433.8,199.2 433.8,200.2 433.9,196.7 434.0,191.9 434.0,193.6 434.1,205.7 434.1,195.0 434.2,195.2 434.2,197.6 434.3,200.2 434.3,202.0 434.4,211.6 434.5,199.9 434.5,199.9 434.6,200.1 434.6,194.0 434.7,200.8 434.7,206.6 434.8,199.8 434.8,210.5 434.9,191.0 435.0,201.8 435.0,203.8 435.1,202.3 435.1,196.4 435.2,199.9 435.2,201.4 435.3,202.1 435.4,200.1 435.4,197.4 435.5,197.6 435.5,210.9 435.6,194.5 435.6,204.3 435.7,194.0 435.7,201.7 435.8,194.1 435.9,210.0 435.9,195.7 436.0,188.8 436.0,208.9 436.1,206.6 436.1,211.1 436.2,199.2 436.2,208.9 436.3,192.4 436.4,200.8 436.4,194.1 436.5,195.5 436.5,197.3 436.6,201.6 436.6,195.5 436.7,210.6 436.7,193.0 436.8,196.2 436.9,200.3 436.9,200.1 437.0,202.2 437.0,201.4 437.1,205.8 437.1,197.2 437.2,204.5 437.3,196.6 437.3,206.4 437.4,196.6 437.4,204.2 437.5,194.5 437.5,193.4 437.6,194.8 437.6,206.9 437.7,194.1 437.8,192.7 437.8,198.0 437.9,203.8 437.9,197.0 438.0,197.1 438.0,197.7 438.1,206.0 438.1,198.7 438.2,205.7 438.3,206.6 438.3,204.1 438.4,193.1 438.4,200.4 438.5,205.9 438.5,201.8 438.6,202.0 438.6,193.8 438.7,209.2 438.8,203.0 438.8,202.4 438.9,198.5 438.9,202.7 439.0,199.4 439.0,199.3 439.1,197.0 439.2,194.4 439.2,198.3 439.3,192.8 439.3,201.0 439.4,200.2 439.4,198.5 439.5,201.0 439.5,195.9 439.6,203.6 439.7,211.7 439.7,200.1 439.8,200.3 439.8,196.3 439.9,204.2 439.9,197.6 440.0,205.3 440.0,206.2 440.1,200.4 440.2,196.3 440.2,199.4 440.3,194.3 440.3,195.7 440.4,200.8 440.4,203.4 440.5,195.9 440.6,194.3 440.6,206.1 440.7,194.7 440.7,198.8 440.8,204.6 440.8,197.9 440.9,205.0 440.9,211.1 441.0,200.8 441.1,206.1 441.1,208.3 441.2,193.3 441.2,197.9 441.3,195.1 441.3,195.7 441.4,211.1 441.4,200.1 441.5,199.9 441.6,193.8 441.6,197.5 441.7,205.1 441.7,201.5 441.8,210.6 441.8,210.3 441.9,197.5 441.9,227.6 442.0,208.0 442.1,206.2 442.1,198.7 442.2,200.7 442.2,203.0 442.3,201.2 442.3,197.7 442.4,202.4 442.5,209.8 442.5,196.6 442.6,204.8 442.6,196.9 442.7,205.2 442.7,213.8 442.8,203.5 442.8,199.3 442.9,203.2 443.0,216.2 443.0,197.5 443.1,201.8 443.1,201.0 443.2,207.9 443.2,209.0 443.3,209.2 443.3,206.9 443.4,205.9 443.5,200.2 443.5,200.4 443.6,219.6 443.6,211.0 443.7,204.4 443.7,203.3 443.8,208.2 443.8,202.1 443.9,198.5 444.0,204.6 444.0,205.7 444.1,206.5 444.1,200.6 444.2,208.3 444.2,206.1 444.3,205.6 444.4,200.3 444.4,201.5 444.5,201.5 444.5,207.6 444.6,209.3 444.6,202.9 444.7,209.8 444.7,199.9 444.8,199.7 444.9,204.7 444.9,201.2 445.0,207.5 445.0,203.3 445.1,201.6 445.1,209.2 445.2,210.6 445.2,215.8 445.3,201.1 445.4,203.0 445.4,203.3 445.5,196.9 445.5,199.3 445.6,200.0 445.6,204.4 445.7,202.1 445.8,219.3 445.8,203.8 445.9,212.8 445.9,213.1 446.0,199.6 446.0,205.0 446.1,199.3 446.1,208.5 446.2,202.9 446.3,195.2 446.3,207.4 446.4,203.3 446.4,201.8 446.5,203.2 446.5,212.3 446.6,203.5 446.6,205.6 446.7,206.3 446.8,202.0 446.8,199.2 446.9,203.7 446.9,202.8 447.0,198.6 447.0,211.4 447.1,210.0 447.1,201.9 447.2,215.6 447.3,196.9 447.3,221.0 447.4,197.1 447.4,198.7 447.5,201.7 447.5,206.9 447.6,198.0 447.7,202.3 447.7,201.4 447.8,196.7 447.8,205.4 447.9,207.4 447.9,206.4 448.0,203.8 448.0,209.5 448.1,208.0 448.2,197.4 448.2,207.3 448.3,222.2 448.3,199.0 448.4,199.0 448.4,206.3 448.5,205.1 448.5,203.2 448.6,205.3 448.7,203.7 448.7,203.9 448.8,209.2 448.8,206.1 448.9,205.3 448.9,199.5 449.0,212.4 449.0,207.5 449.1,217.5 449.2,199.0 449.2,212.5 449.3,212.6 449.3,199.3 449.4,213.0 449.4,210.4 449.5,216.5 449.6,216.8 449.6,205.6 449.7,208.6 449.7,203.1 449.8,219.7 449.8,203.8 449.9,209.6 449.9,212.2 450.0,210.1 450.1,214.7 450.1,216.1 450.2,215.0 450.2,206.8 450.3,208.2 450.3,216.1 450.4,202.1 450.4,210.8 450.5,205.0 450.6,218.3 450.6,204.7 450.7,207.3 450.7,201.4 450.8,212.0 450.8,208.9 450.9,207.2 451.0,206.1 451.0,200.4 451.1,205.4 451.1,209.1 451.2,204.5 451.2,204.1 451.3,203.1 451.3,205.8 451.4,214.3 451.5,210.8 451.5,211.5 451.6,209.6 451.6,207.4 451.7,202.1 451.7,212.8 451.8,204.5 451.8,206.7 451.9,214.8 452.0,212.0 452.0,206.5 452.1,208.7 452.1,204.7 452.2,202.7 452.2,211.3 452.3,202.7 452.3,210.4 452.4,206.3 452.5,212.8 452.5,214.0 452.6,202.5 452.6,209.8 452.7,212.7 452.7,203.1 452.8,210.7 452.9,212.0 452.9,206.7 453.0,215.6 453.0,208.0 453.1,205.0 453.1,212.9 453.2,214.6 453.2,209.3 453.3,212.6 453.4,205.9 453.4,227.3 453.5,204.6 453.5,232.4 453.6,215.2 453.6,208.5 453.7,209.4 453.7,234.5 453.8,217.9 453.9,208.5 453.9,211.2 454.0,216.3 454.0,207.5 454.1,207.5 454.1,219.5 454.2,203.9 454.2,209.3 454.3,211.8 454.4,211.2 454.4,207.6 454.5,209.7 454.5,211.6 454.6,208.1 454.6,206.8 454.7,205.2 454.8,211.9 454.8,203.3 454.9,213.1 454.9,216.8 455.0,210.6 455.0,213.7 455.1,212.1 455.1,212.4 455.2,206.8 455.3,229.1 455.3,216.0 455.4,216.3 455.4,207.7 455.5,209.5 455.5,212.8 455.6,229.0 455.6,214.8 455.7,204.4 455.8,212.4 455.8,211.6 455.9,202.7 455.9,216.8 456.0,207.2 456.0,212.4 456.1,207.4 456.2,212.4 456.2,213.1 456.3,207.7 456.3,207.8 456.4,212.0 456.4,215.2 456.5,209.3 456.5,211.1 456.6,204.8 456.7,212.3 456.7,206.6 456.8,215.0 456.8,212.1 456.9,211.1 456.9,217.5 457.0,231.0 457.0,206.5 457.1,211.0 457.2,218.0 457.2,208.4 457.3,216.5 457.3,219.9 457.4,211.5 457.4,214.1 457.5,207.0 457.5,209.7 457.6,224.8 457.7,210.6 457.7,229.9 457.8,208.3 457.8,211.9 457.9,211.5 457.9,210.8 458.0,213.6 458.1,209.9 458.1,211.3 458.2,220.9 458.2,207.4 458.3,210.5 458.3,222.8 458.4,211.9 458.4,211.2 458.5,213.6 458.6,206.4 458.6,218.5 458.7,214.0 458.7,210.7 458.8,228.7 458.8,226.0 458.9,234.9 458.9,211.1 459.0,214.3 459.1,211.1 459.1,218.1 459.2,212.7 459.2,214.0 459.3,213.5 459.3,207.0 459.4,221.8 459.4,220.1 459.5,218.1 459.6,214.4 459.6,206.8 459.7,205.7 459.7,209.9 459.8,215.6 459.8,217.4 459.9,211.0 460.0,212.8 460.0,223.0 460.1,222.1 460.1,223.1 460.2,211.7 460.2,216.2 460.3,210.2 460.3,216.3 460.4,211.4 460.5,213.9 460.5,220.0 460.6,221.1 460.6,220.4 460.7,217.1 460.7,210.1 460.8,208.8 460.8,230.5 460.9,215.5 461.0,213.1 461.0,221.4 461.1,214.7 461.1,212.8 461.2,209.7 461.2,214.2 461.3,218.4 461.4,223.1 461.4,218.2 461.5,232.7 461.5,211.6 461.6,225.9 461.6,212.0 461.7,220.4 461.7,210.8 461.8,215.2 461.9,216.4 461.9,214.0 462.0,218.5 462.0,216.5 462.1,215.3 462.1,213.1 462.2,216.7 462.2,226.7 462.3,218.4 462.4,218.7 462.4,212.9 462.5,236.9 462.5,217.2 462.6,217.1 462.6,213.0 462.7,222.2 462.7,213.1 462.8,219.6 462.9,216.6 462.9,227.0 463.0,214.6 463.0,221.9 463.1,214.4 463.1,216.7 463.2,220.8 463.3,218.0 463.3,217.8 463.4,241.1 463.4,214.6 463.5,218.1 463.5,211.2 463.6,217.1 463.6,236.4 463.7,217.2 463.8,215.1 463.8,223.5 463.9,232.1 463.9,219.1 464.0,219.4 464.0,224.9 464.1,233.4 464.1,221.8 464.2,216.4 464.3,219.4 464.3,217.9 464.4,219.7 464.4,217.4 464.5,211.8 464.5,233.2 464.6,225.1 464.6,219.9 464.7,221.2 464.8,221.3 464.8,218.0 464.9,224.0 464.9,234.3 465.0,220.0 465.0,221.4 465.1,223.6 465.2,218.4 465.2,222.0 465.3,215.6 465.3,220.6 465.4,220.1 465.4,225.3 465.5,216.7 465.5,212.4 465.6,217.0 465.7,214.5 465.7,216.6 465.8,225.7 465.8,222.8 465.9,222.0 465.9,223.8 466.0,213.0 466.0,223.8 466.1,213.2 466.2,224.4 466.2,226.1 466.3,223.0 466.3,218.7 466.4,219.6 466.4,216.2 466.5,219.8 466.6,222.0 466.6,229.9 466.7,220.8 466.7,217.7 466.8,218.1 466.8,230.0 466.9,216.8 466.9,226.9 467.0,234.4 467.1,223.5 467.1,222.0 467.2,219.2 467.2,215.2 467.3,228.9 467.3,226.0 467.4,220.8 467.4,222.7 467.5,231.2 467.6,222.4 467.6,222.7 467.7,230.4 467.7,226.3 467.8,218.3 467.8,215.9 467.9,229.3 467.9,222.7 468.0,215.6 468.1,222.3 468.1,235.1 468.2,216.7 468.2,222.8 468.3,221.2 468.3,224.1 468.4,217.4 468.5,224.4 468.5,233.6 468.6,223.6 468.6,225.5 468.7,227.8 468.7,227.3 468.8,218.8 468.8,226.9 468.9,222.3 469.0,215.0 469.0,219.6 469.1,224.0 469.1,229.1 469.2,236.0 469.2,224.8 469.3,225.9 469.3,225.9 469.4,222.4 469.5,233.7 469.5,219.2 469.6,242.8 469.6,224.5 469.7,227.4 469.7,239.5 469.8,239.7 469.8,228.9 469.9,226.3 470.0,231.3 470.0,217.1 470.1,222.1 470.1,232.5 470.2,240.9 470.2,217.4 470.3,232.0 470.4,225.1 470.4,219.6 470.5,222.9 470.5,231.2 470.6,224.2 470.6,239.8 470.7,225.2 470.7,227.5 470.8,228.4 470.9,226.3 470.9,225.8 471.0,219.6 471.0,233.1 471.1,232.4 471.1,228.2 471.2,223.5 471.2,231.8 471.3,229.7 471.4,231.0 471.4,227.4 471.5,229.2 471.5,224.5 471.6,233.7 471.6,224.4 471.7,222.2 471.8,243.6 471.8,219.0 471.9,223.9 471.9,237.2 472.0,233.7 472.0,240.8 472.1,226.2 472.1,227.4 472.2,227.4 472.3,238.4 472.3,234.5 472.4,235.1 472.4,222.6 472.5,220.8 472.5,226.7 472.6,222.2 472.6,225.0 472.7,226.8 472.8,233.2 472.8,236.2 472.9,227.2 472.9,225.0 473.0,232.0 473.0,227.8 473.1,230.6 473.1,226.7 473.2,230.3 473.3,250.4 473.3,239.9 473.4,235.6 473.4,242.6 473.5,225.4 473.5,228.2 473.6,236.9 473.7,240.2 473.7,230.4 473.8,223.5 473.8,238.0 473.9,233.5 473.9,227.7 474.0,227.0 474.0,231.2 474.1,233.7 474.2,245.6 474.2,242.2 474.3,228.1 474.3,231.8 474.4,232.3 474.4,226.2 474.5,235.6 474.5,238.7 474.6,235.9 474.7,234.6 474.7,226.8 474.8,223.8 474.8,232.8 474.9,226.2 474.9,235.6 475.0,232.1 475.0,244.4 475.1,225.4 475.2,225.1 475.2,230.8 475.3,228.7 475.3,232.1 475.4,230.0 475.4,243.6 475.5,225.5 475.6,231.6 475.6,240.5 475.7,226.5 475.7,243.2 475.8,233.5 475.8,236.1 475.9,224.5 475.9,230.7 476.0,240.6 476.1,240.6 476.1,249.0 476.2,240.2 476.2,233.6 476.3,234.6 476.3,232.0 476.4,232.7 476.4,229.4 476.5,233.0 476.6,230.0 476.6,258.5 476.7,233.2 476.7,229.1 476.8,239.3 476.8,233.8 476.9,246.3 477.0,232.5 477.0,235.9 477.1,239.7 477.1,236.4 477.2,235.5 477.2,232.5 477.3,235.8 477.3,227.5 477.4,233.4 477.5,230.0 477.5,235.2 477.6,230.4 477.6,250.7 477.7,235.8 477.7,232.4 477.8,245.4 477.8,234.3 477.9,229.5 478.0,238.1 478.0,239.1 478.1,249.8 478.1,228.7 478.2,244.9 478.2,235.2 478.3,241.2 478.3,237.5 478.4,229.3 478.5,224.7 478.5,233.0 478.6,241.2 478.6,229.2 478.7,242.2 478.7,237.8 478.8,233.6 478.9,234.4 478.9,231.7 479.0,239.1 479.0,228.7 479.1,232.2 479.1,229.8 479.2,250.1 479.2,237.0 479.3,247.2 479.4,236.2 479.4,249.9 479.5,231.5 479.5,231.0 479.6,231.8 479.6,248.6 479.7,237.2 479.7,241.3 479.8,238.9 479.9,254.4 479.9,243.1 480.0,245.3 480.0,257.1 480.1,234.1 480.1,240.5 480.2,238.6 480.2,233.7 480.3,242.0 480.4,237.1 480.4,235.2 480.5,237.1 480.5,241.6 480.6,256.2 480.6,245.3 480.7,235.3 480.8,251.8 480.8,234.1 480.9,237.2 480.9,235.6 481.0,240.9 481.0,242.3 481.1,233.2 481.1,238.4 481.2,235.3 481.3,249.7 481.3,245.2 481.4,237.3 481.4,236.8 481.5,238.0 481.5,243.8 481.6,237.8 481.6,233.0 481.7,232.6 481.8,240.8 481.8,237.0 481.9,240.3 481.9,235.2 482.0,244.0 482.0,239.6 482.1,239.2 482.2,236.1 482.2,240.0 482.3,239.9 482.3,244.6 482.4,258.1 482.4,242.1 482.5,235.5 482.5,246.1 482.6,238.9 482.7,250.9 482.7,239.2 482.8,240.8 482.8,238.3 482.9,243.1 482.9,250.1 483.0,239.2 483.0,240.9 483.1,240.6 483.2,240.5 483.2,236.2 483.3,244.5 483.3,237.4 483.4,239.1 483.4,251.1 483.5,248.1 483.5,238.8 483.6,238.2 483.7,249.1 483.7,243.7 483.8,239.5 483.8,246.1 483.9,244.2 483.9,239.9 484.0,246.5 484.1,239.6 484.1,241.0 484.2,246.8 484.2,243.7 484.3,246.5 484.3,246.6 484.4,248.7 484.4,256.9 484.5,235.4 484.6,238.9 484.6,239.2 484.7,261.4 484.7,255.6 484.8,256.7 484.8,239.8 484.9,254.5 484.9,252.4 485.0,244.8 485.1,242.3 485.1,238.3 485.2,242.5 485.2,246.6 485.3,251.6 485.3,242.3 485.4,249.0 485.5,241.4 485.5,247.4 485.6,241.0 485.6,245.3 485.7,249.0 485.7,239.6 485.8,250.0 485.8,244.8 485.9,253.5 486.0,263.6 486.0,244.9 486.1,260.9 486.1,246.5 486.2,244.5 486.2,243.4 486.3,242.1 486.3,254.0 486.4,241.6 486.5,243.5 486.5,246.4 486.6,244.0 486.6,250.0 486.7,255.9 486.7,256.3 486.8,250.0 486.8,250.0 486.9,254.9 487.0,243.8 487.0,256.0 487.1,249.6 487.1,266.7 487.2,250.9 487.2,253.4 487.3,244.8 487.4,250.1 487.4,249.7 487.5,253.6 487.5,257.0 487.6,246.9 487.6,251.9 487.7,255.0 487.7,245.8 487.8,267.5 487.9,244.3 487.9,254.4 488.0,249.5 488.0,243.5 488.1,251.2 488.1,250.3 488.2,249.5 488.2,251.0 488.3,247.9 488.4,257.8 488.4,254.2 488.5,247.5 488.5,251.8 488.6,251.7 488.6,257.7 488.7,251.3 488.7,245.3 488.8,254.2 488.9,250.1 488.9,260.1 489.0,250.1 489.0,247.2 489.1,245.4 489.1,253.0 489.2,245.9 489.3,260.2 489.3,247.5 489.4,252.8 489.4,254.9 489.5,245.3 489.5,264.4 489.6,272.9 489.6,256.1 489.7,249.6 489.8,245.8 489.8,243.9 489.9,273.6 489.9,255.8 490.0,258.7 490.0,255.8 490.1,255.5 490.1,255.0 490.2,279.8 490.3,257.5 490.3,259.1 490.4,252.8 490.4,254.6 490.5,259.0 490.5,263.8 490.6,260.8 490.7,252.5 490.7,252.6 490.8,258.0 490.8,251.6 490.9,257.1 490.9,257.4 491.0,280.3 491.0,248.8 491.1,269.3 491.2,253.3 491.2,268.5 491.3,254.5 491.3,249.7 491.4,250.9 491.4,262.9 491.5,257.8 491.5,268.0 491.6,261.6 491.7,250.4 491.7,256.2 491.8,272.1 491.8,259.0 491.9,263.4 491.9,269.3 492.0,259.1 492.0,251.7 492.1,256.6 492.2,258.1 492.2,263.3 492.3,259.2 492.3,256.6 492.4,268.2 492.4,257.8 492.5,262.1 492.6,254.9 492.6,256.7 492.7,254.2 492.7,262.0 492.8,276.7 492.8,272.5 492.9,264.2 492.9,265.0 493.0,253.3 493.1,269.7 493.1,256.9 493.2,255.3 493.2,264.6 493.3,263.3 493.3,263.1 493.4,265.0 493.4,268.6 493.5,267.5 493.6,256.7 493.6,262.8 493.7,258.9 493.7,254.2 493.8,271.7 493.8,268.9 493.9,269.7 493.9,273.5 494.0,273.1 494.1,272.1 494.1,258.0 494.2,268.2 494.2,285.5 494.3,261.6 494.3,262.6 494.4,259.7 494.5,266.3 494.5,262.4 494.6,276.7 494.6,264.3 494.7,257.1 494.7,270.4 494.8,267.1 494.8,278.2 494.9,262.4 495.0,273.0 495.0,273.3 495.1,274.8 495.1,260.5 495.2,262.6 495.2,267.7 495.3,271.2 495.3,266.3 495.4,269.9 495.5,268.2 495.5,268.6 495.6,279.0 495.6,266.6 495.7,259.3 495.7,267.5 495.8,266.8 495.9,282.3 495.9,274.0 496.0,268.0 496.0,263.0 496.1,263.8 496.1,262.3 496.2,261.0 496.2,260.7 496.3,271.9 496.4,264.4 496.4,267.9 496.5,265.4 496.5,270.5 496.6,261.5 496.6,285.2 496.7,267.2 496.7,266.4 496.8,267.2 496.9,281.5 496.9,273.4 497.0,266.6 497.0,268.2 497.1,265.8 497.1,277.6 497.2,265.5 497.2,269.8 497.3,274.6 497.4,264.0 497.4,273.0 497.5,268.8 497.5,262.3 497.6,272.4 497.6,291.0 497.7,270.7 497.8,269.4 497.8,275.5 497.9,282.9 497.9,266.8 498.0,271.2 498.0,276.6 498.1,278.9 498.1,276.9 498.2,272.1 498.3,269.1 498.3,271.7 498.4,278.7 498.4,275.7 498.5,282.7 498.5,274.4 498.6,282.7 498.6,273.0 498.7,279.9 498.8,276.7 498.8,275.5 498.9,278.8 498.9,279.0 499.0,276.6 499.0,272.7 499.1,280.8 499.1,276.6 499.2,283.1 499.3,270.8 499.3,273.4 499.4,290.1 499.4,272.0 499.5,283.6 499.5,296.2 499.6,275.7 499.7,291.8 499.7,275.6 499.8,288.2 499.8,290.9 499.9,273.6 499.9,287.5 500.0,291.8 500.0,277.0 500.1,336.1 500.2,280.0 500.2,290.7 500.3,288.0 500.3,280.3 500.4,277.8 500.4,283.2 500.5,275.7 500.5,304.6 500.6,287.8 500.7,278.9 500.7,291.1 500.8,303.3 500.8,293.3 500.9,288.6 500.9,306.4 501.0,298.8 501.1,280.4 501.1,280.2 501.2,295.6 501.2,289.4 501.3,282.5 501.3,298.9 501.4,285.6 501.4,297.0 501.5,292.1 501.6,286.8 501.6,281.8 501.7,309.8 501.7,291.2 501.8,293.4 501.8,301.7 501.9,294.9 501.9,291.9 502.0,291.6 502.1,286.0 502.1,291.7 502.2,290.9 502.2,291.7 502.3,283.6 502.3,286.3 502.4,288.2 502.4,295.3 502.5,291.8 502.6,305.3 502.6,295.1 502.7,292.0 502.7,291.2 502.8,317.9 502.8,303.9 502.9,288.2 503.0,308.7 503.0,300.1 503.1,293.5 503.1,293.2 503.2,297.3 503.2,321.2 503.3,299.3 503.3,298.5 503.4,289.3 503.5,291.9 503.5,299.4 503.6,290.6 503.6,295.1 503.7,296.0 503.7,306.6 503.8,306.7 503.8,311.4 503.9,300.4 504.0,291.6 504.0,304.8 504.1,298.1 504.1,301.8 504.2,305.1 504.2,333.2 504.3,296.4 504.3,305.5 504.4,310.2 504.5,314.4 504.5,306.5 504.6,306.5 504.6,294.9 504.7,302.2 504.7,304.3 504.8,314.6 504.9,299.6 504.9,308.4 505.0,315.9 505.0,310.3 505.1,313.2 505.1,300.9 505.2,302.3 505.2,335.4 505.3,316.8 505.4,309.9 505.4,312.5 505.5,323.7 505.5,317.9 505.6,316.9 505.6,326.7 505.7,313.4 505.7,324.8 505.8,323.7 505.9,323.9 505.9,310.8 506.0,325.3 506.0,310.1 506.1,311.6 506.1,322.5 506.2,318.9 506.3,319.3 506.3,328.5 506.4,319.9 506.4,358.1 506.5,329.6 506.5,319.5 506.6,332.0 506.6,314.7 506.7,323.8 506.8,346.9 506.8,329.8 506.9,325.7 506.9,324.0 507.0,332.9 507.0,352.9 507.1,344.5 507.1,323.8 507.2,340.3 507.3,342.8 507.3,328.6 507.4,327.5 507.4,337.7 507.5,325.7 507.5,335.2 507.6,328.7 507.6,342.3 507.7,350.3 507.8,338.0 507.8,333.7 507.9,334.1 507.9,359.6 508.0,351.9 508.0,341.9 508.1,335.5 508.2,336.8 508.2,348.4 508.3,330.4 508.3,331.9 508.4,331.7 508.4,343.6 508.5,346.2 508.5,339.1 508.6,366.2 508.7,348.6 508.7,342.5 508.8,346.3 508.8,347.7 508.9,346.4 508.9,348.0 509.0,337.5 509.0,351.7 509.1,350.1 509.2,357.6 509.2,353.5 509.3,338.7 509.3,347.2 509.4,367.8 509.4,349.4 509.5,346.8 509.5,371.9 509.6,356.7 509.7,352.9 509.7,361.9 509.8,349.9 509.8,354.2 509.9,354.1 509.9,353.1 510.0,366.0 510.1,348.7 510.1,354.2 510.2,369.6 510.2,353.6 510.3,347.2 510.3,371.0 510.4,367.4 510.4,356.4 510.5,367.2"/>
<g stroke="#d0d0d0" stroke-opacity="0.34" stroke-width="1" fill="none">
<path d="M97.5 46V421"/><path d="M143.5 46V421"/><path d="M189.5 46V421"/><path d="M235.5 46V421"/><path d="M281.5 46V421"/><path d="M327.5 46V421"/><path d="M373.5 46V421"/><path d="M419.5 46V421"/><path d="M465.5 46V421"/><path d="M53 57.5H510"/><path d="M53 117.5H510"/><path d="M53 178.5H510"/><path d="M53 239.5H510"/><path d="M53 300.5H510"/><path d="M53 361.5H510"/>
</g>
<rect x="52.5" y="45.5" width="458" height="376" fill="none" stroke="#afafaf" stroke-width="1"/>
<g stroke="#afafaf" stroke-width="1"><path d="M97.5 421.5v-4.5M97.5 45.5v4.5"/><path d="M143.5 421.5v-4.5M143.5 45.5v4.5"/><path d="M189.5 421.5v-4.5M189.5 45.5v4.5"/><path d="M235.5 421.5v-4.5M235.5 45.5v4.5"/><path d="M281.5 421.5v-4.5M281.5 45.5v4.5"/><path d="M327.5 421.5v-4.5M327.5 45.5v4.5"/><path d="M373.5 421.5v-4.5M373.5 45.5v4.5"/><path d="M419.5 421.5v-4.5M419.5 45.5v4.5"/><path d="M465.5 421.5v-4.5M465.5 45.5v4.5"/><path d="M52.5 57.5h4.5M510.5 57.5h-4.5"/><path d="M52.5 117.5h4.5M510.5 117.5h-4.5"/><path d="M52.5 178.5h4.5M510.5 178.5h-4.5"/><path d="M52.5 239.5h4.5M510.5 239.5h-4.5"/><path d="M52.5 300.5h4.5M510.5 300.5h-4.5"/><path d="M52.5 361.5h4.5M510.5 361.5h-4.5"/></g>
</svg>
<div class="tick" style="left:81.1px;top:426.6px;width:40px;text-align:center">-2</div>
<div class="tick" style="left:123.7px;top:426.6px;width:40px;text-align:center">-1.5</div>
<div class="tick" style="left:172.2px;top:426.6px;width:40px;text-align:center">-1</div>
<div class="tick" style="left:215.5px;top:426.6px;width:40px;text-align:center">-0.5</div>
<div class="tick" style="left:265.8px;top:426.6px;width:40px;text-align:center">0</div>
<div class="tick" style="left:308.3px;top:426.6px;width:40px;text-align:center">0.5</div>
<div class="tick" style="left:356.2px;top:426.6px;width:40px;text-align:center">1</div>
<div class="tick" style="left:400.5px;top:426.6px;width:40px;text-align:center">1.5</div>
<div class="tick" style="left:448.4px;top:426.6px;width:40px;text-align:center">2</div>
<div class="tick" style="left:8.2px;top:51.6px;width:40px;text-align:right">-50</div>
<div class="tick" style="left:8.2px;top:112.5px;width:40px;text-align:right">-100</div>
<div class="tick" style="left:8.2px;top:173.5px;width:40px;text-align:right">-150</div>
<div class="tick" style="left:8.2px;top:234.3px;width:40px;text-align:right">-200</div>
<div class="tick" style="left:8.2px;top:294.5px;width:40px;text-align:right">-250</div>
<div class="tick" style="left:8.2px;top:355.5px;width:40px;text-align:right">-300</div>
<div class="tick" style="left:8.2px;top:416.4px;width:40px;text-align:right">-350</div>
<div class="t" style="left:224px;top:441.5px;width:115px;text-align:center;font-size:12.5px;line-height:14px;color:#afafaf">Frequency (GHz)</div>
<div class="t" style="left:-21.7px;top:224px;width:80px;height:14px;text-align:center;font-size:12.5px;line-height:14px;color:#afafaf;transform:rotate(-90deg);transform-origin:50% 50%">dBm / Hz</div>

<!-- side arrows -->
<svg class="abs" style="left:524px;top:222px" width="10" height="44" viewBox="524 222 10 44" fill="#fff">
<path d="M526 225.5l5.5 2.7-5.5 2.7z M526 233.7l5.5 2.7-5.5 2.7z M526 241.7l5.5 2.7-5.5 2.7z M526 249.7l5.5 2.7-5.5 2.7z M526 257.7l5.5 2.7-5.5 2.7z"/>
</svg>

<!-- panel -->
<div class="abs" style="left:540px;top:30px;width:260px;height:322px;border:1px solid #7f7f7f;background:#000"></div>
<div class="abs" style="left:541px;top:31px;width:258px;height:20px;background:#262626"></div>
<div class="t" style="left:569.5px;top:32.3px;font-size:13.2px;line-height:16px;font-weight:bold;color:#fff">Spectral Mask</div>
<svg class="abs" style="left:541px;top:30px" width="258" height="21" viewBox="541 30 258 21">
<g fill="#fff" stroke="none">
<rect x="547" y="35.200" width="5" height="1.700"/>
<path d="M549.500 38l2.600 3h-2v3.200h-1.200v-3.200h-2z"/>
<path d="M556.800 36h7.500l-3.750 7.200z"/>
</g>
<g stroke="#fff" stroke-width="1.5" fill="none">
<path d="M785.500 35l7 7M792.500 35l-7 7" stroke-width="1.700"/>
<path d="M773 36.600h5.400v5.300" stroke-width="1.500"/><path d="M778 37.200l-4 4.900" stroke-width="2.100"/>
</g>
</svg>

<!-- Settings section -->
<svg class="abs" style="left:545px;top:56px" width="10" height="12" viewBox="545 56 10 12"><path d="M546 58h7l-3.5 7.3z" fill="#a8a8a8"/></svg>
<div class="t" style="left:557px;top:54px;font-size:13px;line-height:16px;letter-spacing:0.2px;color:#adadad">Settings</div>
<div class="abs" style="left:545px;top:72px;width:250px;height:117px;border:1px solid #8a8a8a"></div>

<div class="lab" style="left:548px;width:141px;top:78px">Masks:</div>
<div class="lab" style="left:548px;width:141px;top:101px">Upper limits:</div>
<div class="lab" style="left:548px;width:141px;top:123px;letter-spacing:-0.22px">Reference level (dBr):</div>
<div class="lab" style="left:548px;width:141px;top:144px;letter-spacing:-0.3px">Channel:</div>
<div class="lab" style="left:548px;width:141px;top:165px;letter-spacing:-0.06px">Frequency offset (Hz):</div>

<!-- controls -->
<div class="abs" style="left:696px;top:77px;width:94px;height:23px;background:#fff;border:1px solid #adadad"></div>
<div class="abs" style="left:774px;top:78px;width:15px;height:21px;background:#e4e4e4"></div>
<div class="t" style="left:699px;top:82px;font-size:13px;line-height:16px;color:#000">Upper</div>

<div class="abs" style="left:696px;top:100px;width:94px;height:21px;background:#f0f0f0;border:1px solid #adadad;overflow:hidden"><div class="t" style="left:1px;top:2px;width:90px;overflow:hidden;font-size:13px;line-height:16px;letter-spacing:-0.25px;color:#000">[-Inf -18;-3993600</div></div>

<div class="abs" style="left:696px;top:121px;width:94px;height:22px;background:#f0f0f0;border:1px solid #adadad"></div>
<div class="abs" style="left:773px;top:121px;width:17px;height:22px;background:#e4e4e4;border:1px solid #adadad"></div>
<div class="t" style="left:698px;top:125px;font-size:13px;line-height:16px;color:#000">Spectrum pe</div>

<div class="abs" style="left:696px;top:143px;width:94px;height:22px;background:#fff;border:1px solid #adadad"></div>
<div class="abs" style="left:774px;top:144px;width:15px;height:20px;background:#e4e4e4"></div>
<div class="t" style="left:699px;top:147.500px;font-size:13px;line-height:16px;color:#000">1</div>

<div class="abs" style="left:696px;top:164px;width:94px;height:21px;background:#e9e9e9;border:1px solid #adadad"></div>
<div class="t" style="left:697.500px;top:167px;font-size:13px;line-height:16px;color:#000">0</div>

<svg class="abs" style="left:774px;top:77px" width="17" height="90" viewBox="774 77 17 90" fill="none" stroke="#505050" stroke-width="0.95">
<path d="M777.500 87.500l4 4 4-4"/><path d="M777.500 131.300l4 4 4-4"/><path d="M777.500 153.500l4 4 4-4"/>
</svg>

<!-- Statistics section -->
<svg class="abs" style="left:545px;top:195px" width="10" height="12" viewBox="545 195 10 12"><path d="M546 197.2h7l-3.5 7.3z" fill="#a8a8a8"/></svg>
<div class="t" style="left:557px;top:193px;font-size:13px;line-height:16px;letter-spacing:0.27px;color:#adadad">Statistics</div>
<div class="abs" style="left:545px;top:211px;width:250px;height:136px;border:1px solid #8a8a8a"></div>

<div class="lab" style="left:548px;width:117px;top:217px;letter-spacing:0.11px">Success rate (%):</div><div class="val" style="left:673px;top:217px">100</div>
<div class="lab" style="left:548px;width:117px;top:238px;letter-spacing:0.15px">Passed tests:</div><div class="val" style="left:673px;top:238px">1</div>
<div class="lab" style="left:548px;width:117px;top:259px;letter-spacing:0.16px">Total tests:</div><div class="val" style="left:673px;top:259px">1</div>
<div class="lab" style="left:548px;width:117px;top:280px">Current status:</div><div class="val" style="left:673px;top:280px">Passing</div>
<div class="lab" style="left:548px;width:117px;top:301px">Failing mask(s):</div><div class="val" style="left:673px;top:301px">None</div>
<div class="lab" style="left:548px;width:117px;top:322px">Failing channel(s):</div><div class="val" style="left:673px;top:322px">None</div>
</div></body></html>
